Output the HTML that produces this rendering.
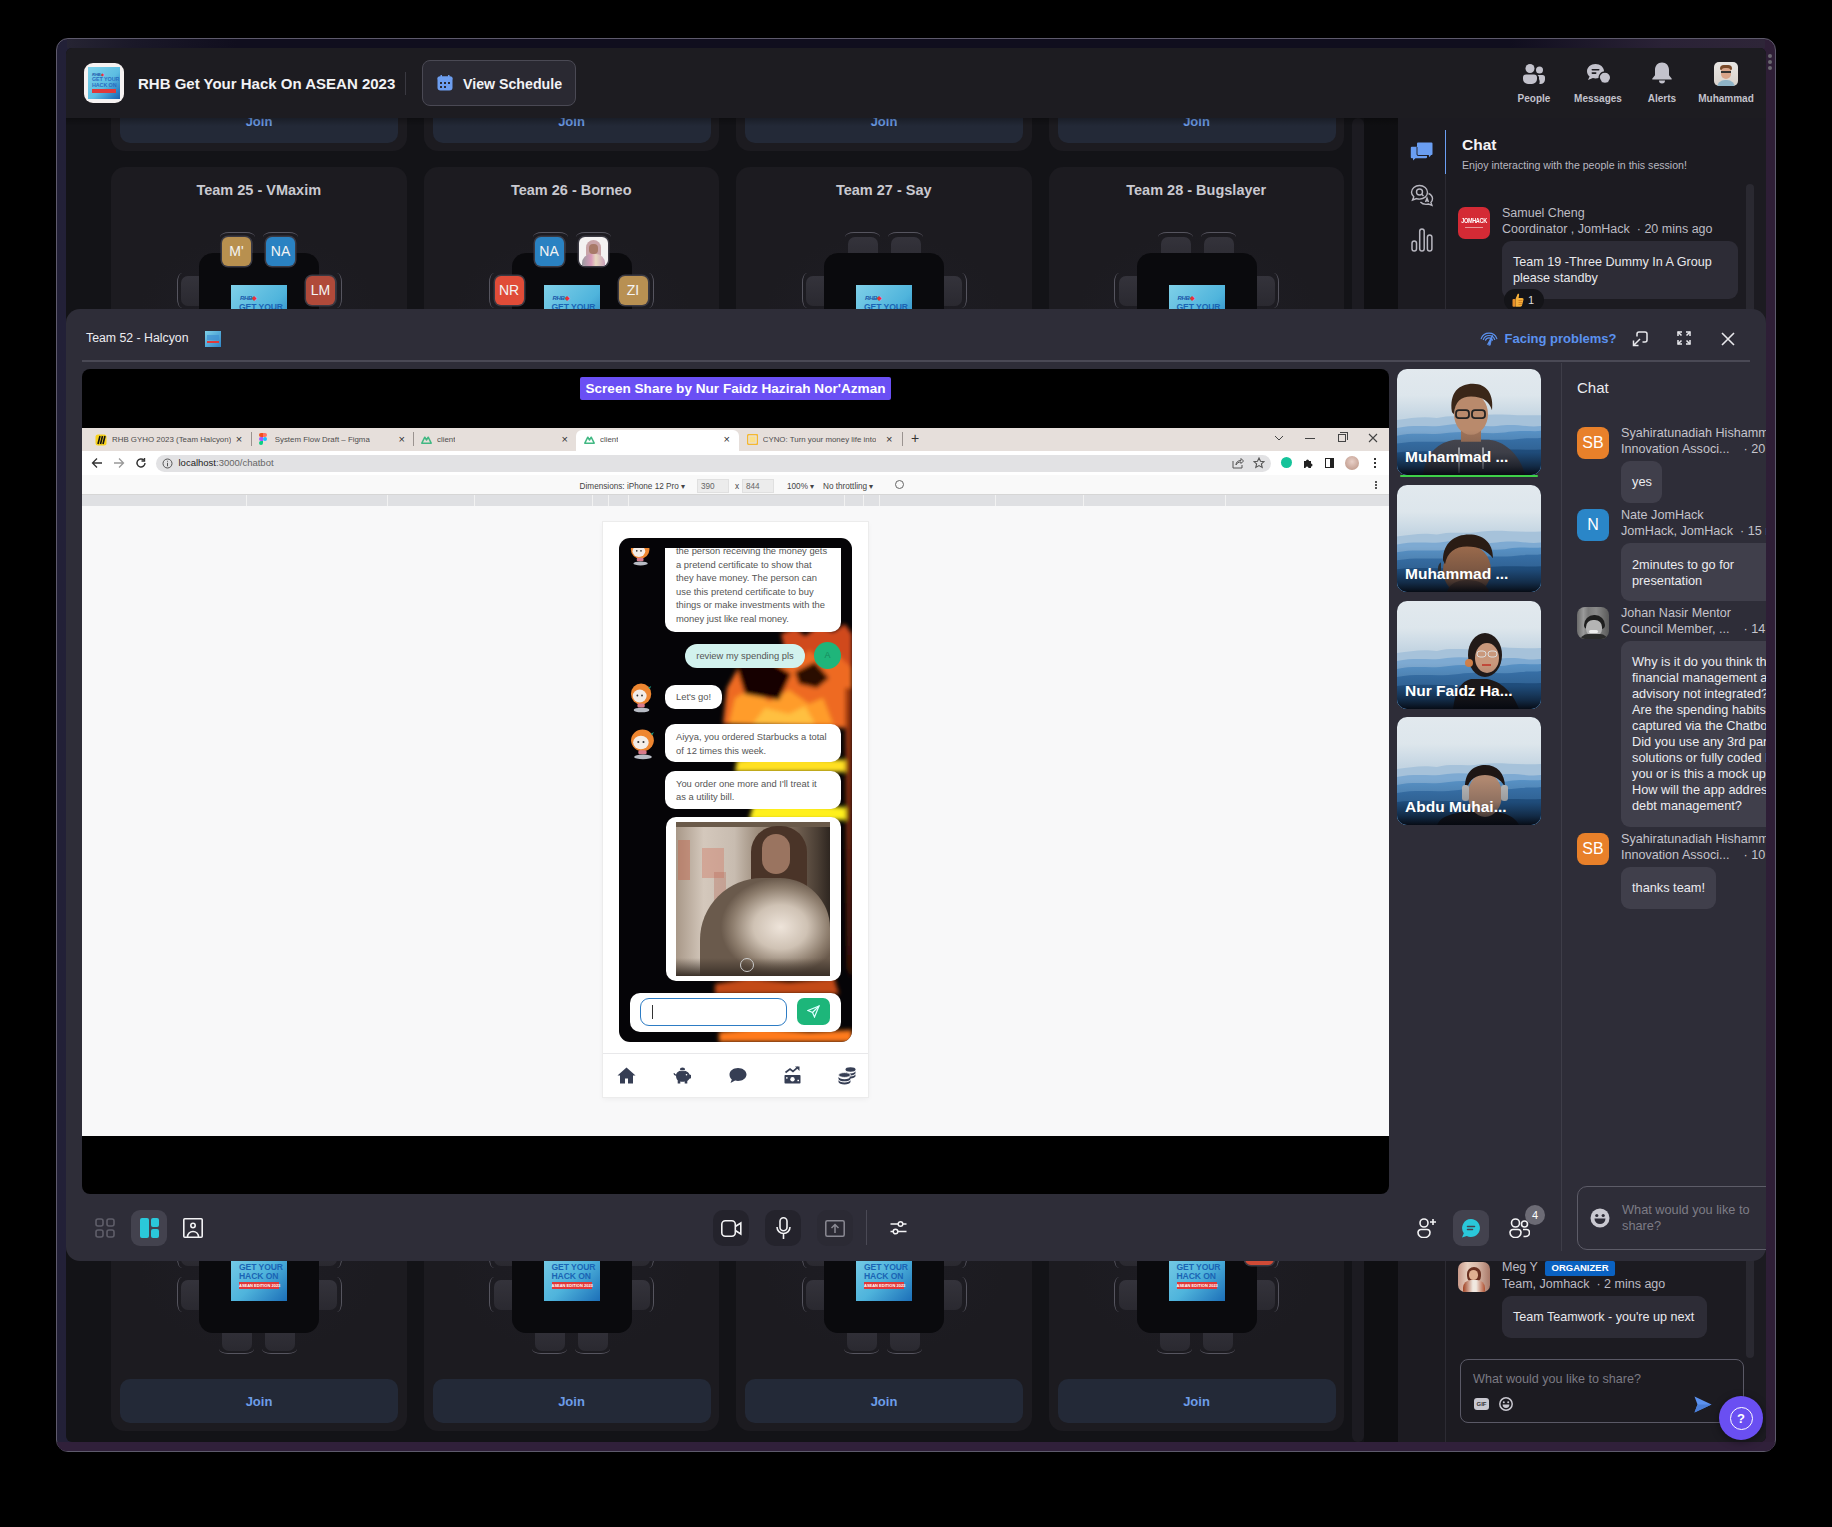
<!DOCTYPE html><html><head><meta charset="utf-8"><style>
*{box-sizing:border-box;margin:0;padding:0}
html,body{width:1832px;height:1527px;overflow:hidden;background:#000;font-family:"Liberation Sans",sans-serif}
.a{position:absolute}
#frame{left:56px;top:38px;width:1720px;height:1414px;border-radius:12px;border:1px solid #5e5a6c;background:linear-gradient(90deg,#222037 0%,#262039 50%,#2e1e36 100%)}
#app{left:66px;top:48px;width:1700px;height:1394px;border-radius:6px;overflow:hidden;background:#131317}
.card{width:295.5px;height:304px;border-radius:14px;background:#1c1b20}
.card .tt{position:absolute;left:0;right:0;top:14px;text-align:center;color:#c9c9d0;font-weight:bold;font-size:14.5px;line-height:18px}
.join{position:absolute;left:9px;top:252px;width:278px;height:44px;border-radius:10px;background:#232937;color:#6d9de8;font-weight:bold;font-size:13px;text-align:center;line-height:46px}
.tbl{position:absolute;left:88px;top:86px;width:120px;height:120px;border-radius:14px;background:#0a0a0d}
.seat{position:absolute;width:30px;height:30px;border-radius:7px;background:linear-gradient(180deg,#34333b,#2a2930)}
.so{position:absolute;border-style:solid;border-color:#56555f}
.logo{position:absolute;left:120px;top:118px;width:56px;height:56px;background:linear-gradient(135deg,#7fd0e8 0%,#4fb4dc 55%,#1c6fb8 100%);overflow:hidden}
.av{position:absolute;width:29px;height:29px;border-radius:6px;color:#f4f4f4;font-size:14px;text-align:center;line-height:29px;box-shadow:0 0 0 1.5px #3a3942}
</style></head><body>
<div id="frame" class="a"></div>
<div class="a" style="left:67px;top:39px;width:1698px;height:9px;background:linear-gradient(90deg,#262433 0%,#1a1828 4%,#100e1e 10%,#100e1e 85%,#2a2236 94%,#2e2538 100%)"></div>
<div class="a" style="left:57px;top:1442px;width:1718px;height:9px;border-radius:0 0 11px 11px;background:#30203a"></div>
<div class="a" style="left:66px;top:48px;width:1700px;height:1394px;border-radius:6px;overflow:hidden;background:#131317">
<div class="a card" style="left:45px;top:-201px"><div class="a" style="left:28px;top:66px;width:240px;height:160px;border-radius:50%;background:radial-gradient(ellipse 50% 50% at 50% 50%,#1f1e24 0%,#1d1c22 60%,rgba(28,27,32,0) 100%)"></div><div class="tt"></div><div class="seat" style="left:112px;top:70px"></div><div class="seat" style="left:155px;top:70px"></div><div class="seat" style="left:70px;top:109px"></div><div class="seat" style="left:70px;top:153px"></div><div class="seat" style="left:196px;top:109px"></div><div class="seat" style="left:196px;top:153px"></div><div class="seat" style="left:111px;top:194px"></div><div class="seat" style="left:154px;top:194px"></div><div class="so" style="left:109px;top:64.5px;width:35px;height:10px;border-width:1px 0 0 0;border-radius:9px 9px 0 0/5px 5px 0 0"></div><div class="so" style="left:108px;top:216.5px;width:35px;height:10px;border-width:0 0 1px 0;border-radius:0 0 9px 9px/0 0 5px 5px"></div><div class="so" style="left:152px;top:64.5px;width:35px;height:10px;border-width:1px 0 0 0;border-radius:9px 9px 0 0/5px 5px 0 0"></div><div class="so" style="left:151px;top:216.5px;width:35px;height:10px;border-width:0 0 1px 0;border-radius:0 0 9px 9px/0 0 5px 5px"></div><div class="so" style="left:65.5px;top:106px;width:10px;height:35px;border-width:0 0 0 1px;border-radius:5px 0 0 5px/9px 0 0 9px"></div><div class="so" style="left:220.5px;top:106px;width:10px;height:35px;border-width:0 1px 0 0;border-radius:0 5px 5px 0/0 9px 9px 0"></div><div class="so" style="left:65.5px;top:150px;width:10px;height:35px;border-width:0 0 0 1px;border-radius:5px 0 0 5px/9px 0 0 9px"></div><div class="so" style="left:220.5px;top:150px;width:10px;height:35px;border-width:0 1px 0 0;border-radius:0 5px 5px 0/0 9px 9px 0"></div><div class="tbl"></div><div class="logo"><div class="a" style="left:9px;top:10px;font:italic bold 6px/7px 'Liberation Sans';color:#1a55a8;letter-spacing:-0.3px">RHB<span style="color:#e8323a;font-style:normal">&#9670;</span></div><div class="a" style="left:8px;top:18px;width:42px;font:bold 8.6px/8.5px 'Liberation Sans';color:#1a64b4;letter-spacing:-0.1px;white-space:nowrap">GET YOUR<br>HACK ON</div><div class="a" style="left:8px;top:37px;width:40px;height:7px;background:#e0393a;font:bold 4px/7px 'Liberation Sans';color:#fff;text-align:center;white-space:nowrap">ASEAN EDITION 2023</div></div><div class="join">Join</div></div>
<div class="a card" style="left:357.5px;top:-201px"><div class="a" style="left:28px;top:66px;width:240px;height:160px;border-radius:50%;background:radial-gradient(ellipse 50% 50% at 50% 50%,#1f1e24 0%,#1d1c22 60%,rgba(28,27,32,0) 100%)"></div><div class="tt"></div><div class="seat" style="left:112px;top:70px"></div><div class="seat" style="left:155px;top:70px"></div><div class="seat" style="left:70px;top:109px"></div><div class="seat" style="left:70px;top:153px"></div><div class="seat" style="left:196px;top:109px"></div><div class="seat" style="left:196px;top:153px"></div><div class="seat" style="left:111px;top:194px"></div><div class="seat" style="left:154px;top:194px"></div><div class="so" style="left:109px;top:64.5px;width:35px;height:10px;border-width:1px 0 0 0;border-radius:9px 9px 0 0/5px 5px 0 0"></div><div class="so" style="left:108px;top:216.5px;width:35px;height:10px;border-width:0 0 1px 0;border-radius:0 0 9px 9px/0 0 5px 5px"></div><div class="so" style="left:152px;top:64.5px;width:35px;height:10px;border-width:1px 0 0 0;border-radius:9px 9px 0 0/5px 5px 0 0"></div><div class="so" style="left:151px;top:216.5px;width:35px;height:10px;border-width:0 0 1px 0;border-radius:0 0 9px 9px/0 0 5px 5px"></div><div class="so" style="left:65.5px;top:106px;width:10px;height:35px;border-width:0 0 0 1px;border-radius:5px 0 0 5px/9px 0 0 9px"></div><div class="so" style="left:220.5px;top:106px;width:10px;height:35px;border-width:0 1px 0 0;border-radius:0 5px 5px 0/0 9px 9px 0"></div><div class="so" style="left:65.5px;top:150px;width:10px;height:35px;border-width:0 0 0 1px;border-radius:5px 0 0 5px/9px 0 0 9px"></div><div class="so" style="left:220.5px;top:150px;width:10px;height:35px;border-width:0 1px 0 0;border-radius:0 5px 5px 0/0 9px 9px 0"></div><div class="tbl"></div><div class="logo"><div class="a" style="left:9px;top:10px;font:italic bold 6px/7px 'Liberation Sans';color:#1a55a8;letter-spacing:-0.3px">RHB<span style="color:#e8323a;font-style:normal">&#9670;</span></div><div class="a" style="left:8px;top:18px;width:42px;font:bold 8.6px/8.5px 'Liberation Sans';color:#1a64b4;letter-spacing:-0.1px;white-space:nowrap">GET YOUR<br>HACK ON</div><div class="a" style="left:8px;top:37px;width:40px;height:7px;background:#e0393a;font:bold 4px/7px 'Liberation Sans';color:#fff;text-align:center;white-space:nowrap">ASEAN EDITION 2023</div></div><div class="join">Join</div></div>
<div class="a card" style="left:670px;top:-201px"><div class="a" style="left:28px;top:66px;width:240px;height:160px;border-radius:50%;background:radial-gradient(ellipse 50% 50% at 50% 50%,#1f1e24 0%,#1d1c22 60%,rgba(28,27,32,0) 100%)"></div><div class="tt"></div><div class="seat" style="left:112px;top:70px"></div><div class="seat" style="left:155px;top:70px"></div><div class="seat" style="left:70px;top:109px"></div><div class="seat" style="left:70px;top:153px"></div><div class="seat" style="left:196px;top:109px"></div><div class="seat" style="left:196px;top:153px"></div><div class="seat" style="left:111px;top:194px"></div><div class="seat" style="left:154px;top:194px"></div><div class="so" style="left:109px;top:64.5px;width:35px;height:10px;border-width:1px 0 0 0;border-radius:9px 9px 0 0/5px 5px 0 0"></div><div class="so" style="left:108px;top:216.5px;width:35px;height:10px;border-width:0 0 1px 0;border-radius:0 0 9px 9px/0 0 5px 5px"></div><div class="so" style="left:152px;top:64.5px;width:35px;height:10px;border-width:1px 0 0 0;border-radius:9px 9px 0 0/5px 5px 0 0"></div><div class="so" style="left:151px;top:216.5px;width:35px;height:10px;border-width:0 0 1px 0;border-radius:0 0 9px 9px/0 0 5px 5px"></div><div class="so" style="left:65.5px;top:106px;width:10px;height:35px;border-width:0 0 0 1px;border-radius:5px 0 0 5px/9px 0 0 9px"></div><div class="so" style="left:220.5px;top:106px;width:10px;height:35px;border-width:0 1px 0 0;border-radius:0 5px 5px 0/0 9px 9px 0"></div><div class="so" style="left:65.5px;top:150px;width:10px;height:35px;border-width:0 0 0 1px;border-radius:5px 0 0 5px/9px 0 0 9px"></div><div class="so" style="left:220.5px;top:150px;width:10px;height:35px;border-width:0 1px 0 0;border-radius:0 5px 5px 0/0 9px 9px 0"></div><div class="tbl"></div><div class="logo"><div class="a" style="left:9px;top:10px;font:italic bold 6px/7px 'Liberation Sans';color:#1a55a8;letter-spacing:-0.3px">RHB<span style="color:#e8323a;font-style:normal">&#9670;</span></div><div class="a" style="left:8px;top:18px;width:42px;font:bold 8.6px/8.5px 'Liberation Sans';color:#1a64b4;letter-spacing:-0.1px;white-space:nowrap">GET YOUR<br>HACK ON</div><div class="a" style="left:8px;top:37px;width:40px;height:7px;background:#e0393a;font:bold 4px/7px 'Liberation Sans';color:#fff;text-align:center;white-space:nowrap">ASEAN EDITION 2023</div></div><div class="join">Join</div></div>
<div class="a card" style="left:982.5px;top:-201px"><div class="a" style="left:28px;top:66px;width:240px;height:160px;border-radius:50%;background:radial-gradient(ellipse 50% 50% at 50% 50%,#1f1e24 0%,#1d1c22 60%,rgba(28,27,32,0) 100%)"></div><div class="tt"></div><div class="seat" style="left:112px;top:70px"></div><div class="seat" style="left:155px;top:70px"></div><div class="seat" style="left:70px;top:109px"></div><div class="seat" style="left:70px;top:153px"></div><div class="seat" style="left:196px;top:109px"></div><div class="seat" style="left:196px;top:153px"></div><div class="seat" style="left:111px;top:194px"></div><div class="seat" style="left:154px;top:194px"></div><div class="so" style="left:109px;top:64.5px;width:35px;height:10px;border-width:1px 0 0 0;border-radius:9px 9px 0 0/5px 5px 0 0"></div><div class="so" style="left:108px;top:216.5px;width:35px;height:10px;border-width:0 0 1px 0;border-radius:0 0 9px 9px/0 0 5px 5px"></div><div class="so" style="left:152px;top:64.5px;width:35px;height:10px;border-width:1px 0 0 0;border-radius:9px 9px 0 0/5px 5px 0 0"></div><div class="so" style="left:151px;top:216.5px;width:35px;height:10px;border-width:0 0 1px 0;border-radius:0 0 9px 9px/0 0 5px 5px"></div><div class="so" style="left:65.5px;top:106px;width:10px;height:35px;border-width:0 0 0 1px;border-radius:5px 0 0 5px/9px 0 0 9px"></div><div class="so" style="left:220.5px;top:106px;width:10px;height:35px;border-width:0 1px 0 0;border-radius:0 5px 5px 0/0 9px 9px 0"></div><div class="so" style="left:65.5px;top:150px;width:10px;height:35px;border-width:0 0 0 1px;border-radius:5px 0 0 5px/9px 0 0 9px"></div><div class="so" style="left:220.5px;top:150px;width:10px;height:35px;border-width:0 1px 0 0;border-radius:0 5px 5px 0/0 9px 9px 0"></div><div class="tbl"></div><div class="logo"><div class="a" style="left:9px;top:10px;font:italic bold 6px/7px 'Liberation Sans';color:#1a55a8;letter-spacing:-0.3px">RHB<span style="color:#e8323a;font-style:normal">&#9670;</span></div><div class="a" style="left:8px;top:18px;width:42px;font:bold 8.6px/8.5px 'Liberation Sans';color:#1a64b4;letter-spacing:-0.1px;white-space:nowrap">GET YOUR<br>HACK ON</div><div class="a" style="left:8px;top:37px;width:40px;height:7px;background:#e0393a;font:bold 4px/7px 'Liberation Sans';color:#fff;text-align:center;white-space:nowrap">ASEAN EDITION 2023</div></div><div class="join">Join</div></div>
<div class="a card" style="left:45px;top:119px"><div class="a" style="left:28px;top:66px;width:240px;height:160px;border-radius:50%;background:radial-gradient(ellipse 50% 50% at 50% 50%,#1f1e24 0%,#1d1c22 60%,rgba(28,27,32,0) 100%)"></div><div class="tt">Team 25 - VMaxim</div><div class="seat" style="left:112px;top:70px"></div><div class="seat" style="left:155px;top:70px"></div><div class="seat" style="left:70px;top:109px"></div><div class="seat" style="left:70px;top:153px"></div><div class="seat" style="left:196px;top:109px"></div><div class="seat" style="left:196px;top:153px"></div><div class="seat" style="left:111px;top:194px"></div><div class="seat" style="left:154px;top:194px"></div><div class="so" style="left:109px;top:64.5px;width:35px;height:10px;border-width:1px 0 0 0;border-radius:9px 9px 0 0/5px 5px 0 0"></div><div class="so" style="left:108px;top:216.5px;width:35px;height:10px;border-width:0 0 1px 0;border-radius:0 0 9px 9px/0 0 5px 5px"></div><div class="so" style="left:152px;top:64.5px;width:35px;height:10px;border-width:1px 0 0 0;border-radius:9px 9px 0 0/5px 5px 0 0"></div><div class="so" style="left:151px;top:216.5px;width:35px;height:10px;border-width:0 0 1px 0;border-radius:0 0 9px 9px/0 0 5px 5px"></div><div class="so" style="left:65.5px;top:106px;width:10px;height:35px;border-width:0 0 0 1px;border-radius:5px 0 0 5px/9px 0 0 9px"></div><div class="so" style="left:220.5px;top:106px;width:10px;height:35px;border-width:0 1px 0 0;border-radius:0 5px 5px 0/0 9px 9px 0"></div><div class="so" style="left:65.5px;top:150px;width:10px;height:35px;border-width:0 0 0 1px;border-radius:5px 0 0 5px/9px 0 0 9px"></div><div class="so" style="left:220.5px;top:150px;width:10px;height:35px;border-width:0 1px 0 0;border-radius:0 5px 5px 0/0 9px 9px 0"></div><div class="tbl"></div><div class="logo"><div class="a" style="left:9px;top:10px;font:italic bold 6px/7px 'Liberation Sans';color:#1a55a8;letter-spacing:-0.3px">RHB<span style="color:#e8323a;font-style:normal">&#9670;</span></div><div class="a" style="left:8px;top:18px;width:42px;font:bold 8.6px/8.5px 'Liberation Sans';color:#1a64b4;letter-spacing:-0.1px;white-space:nowrap">GET YOUR<br>HACK ON</div><div class="a" style="left:8px;top:37px;width:40px;height:7px;background:#e0393a;font:bold 4px/7px 'Liberation Sans';color:#fff;text-align:center;white-space:nowrap">ASEAN EDITION 2023</div></div><div class="av" style="left:111px;top:69.5px;background:#b8904f">M'</div><div class="av" style="left:155px;top:69.5px;background:#2a82c2">NA</div><div class="av" style="left:195px;top:109px;background:#b04a3a">LM</div><div class="join">Join</div></div>
<div class="a card" style="left:357.5px;top:119px"><div class="a" style="left:28px;top:66px;width:240px;height:160px;border-radius:50%;background:radial-gradient(ellipse 50% 50% at 50% 50%,#1f1e24 0%,#1d1c22 60%,rgba(28,27,32,0) 100%)"></div><div class="tt">Team 26 - Borneo</div><div class="seat" style="left:112px;top:70px"></div><div class="seat" style="left:155px;top:70px"></div><div class="seat" style="left:70px;top:109px"></div><div class="seat" style="left:70px;top:153px"></div><div class="seat" style="left:196px;top:109px"></div><div class="seat" style="left:196px;top:153px"></div><div class="seat" style="left:111px;top:194px"></div><div class="seat" style="left:154px;top:194px"></div><div class="so" style="left:109px;top:64.5px;width:35px;height:10px;border-width:1px 0 0 0;border-radius:9px 9px 0 0/5px 5px 0 0"></div><div class="so" style="left:108px;top:216.5px;width:35px;height:10px;border-width:0 0 1px 0;border-radius:0 0 9px 9px/0 0 5px 5px"></div><div class="so" style="left:152px;top:64.5px;width:35px;height:10px;border-width:1px 0 0 0;border-radius:9px 9px 0 0/5px 5px 0 0"></div><div class="so" style="left:151px;top:216.5px;width:35px;height:10px;border-width:0 0 1px 0;border-radius:0 0 9px 9px/0 0 5px 5px"></div><div class="so" style="left:65.5px;top:106px;width:10px;height:35px;border-width:0 0 0 1px;border-radius:5px 0 0 5px/9px 0 0 9px"></div><div class="so" style="left:220.5px;top:106px;width:10px;height:35px;border-width:0 1px 0 0;border-radius:0 5px 5px 0/0 9px 9px 0"></div><div class="so" style="left:65.5px;top:150px;width:10px;height:35px;border-width:0 0 0 1px;border-radius:5px 0 0 5px/9px 0 0 9px"></div><div class="so" style="left:220.5px;top:150px;width:10px;height:35px;border-width:0 1px 0 0;border-radius:0 5px 5px 0/0 9px 9px 0"></div><div class="tbl"></div><div class="logo"><div class="a" style="left:9px;top:10px;font:italic bold 6px/7px 'Liberation Sans';color:#1a55a8;letter-spacing:-0.3px">RHB<span style="color:#e8323a;font-style:normal">&#9670;</span></div><div class="a" style="left:8px;top:18px;width:42px;font:bold 8.6px/8.5px 'Liberation Sans';color:#1a64b4;letter-spacing:-0.1px;white-space:nowrap">GET YOUR<br>HACK ON</div><div class="a" style="left:8px;top:37px;width:40px;height:7px;background:#e0393a;font:bold 4px/7px 'Liberation Sans';color:#fff;text-align:center;white-space:nowrap">ASEAN EDITION 2023</div></div><div class="av" style="left:111px;top:69.5px;background:#2a82c2">NA</div><div class="av" style="left:155px;top:69.5px;background:#f4f2f2;overflow:hidden"><div class="a" style="left:7px;top:3px;width:15px;height:18px;border-radius:8px 8px 4px 4px;background:#c9a4a8"></div><div class="a" style="left:10px;top:7px;width:9px;height:10px;border-radius:4px;background:#a87a68"></div><div class="a" style="left:3px;top:17px;width:23px;height:14px;border-radius:9px 9px 0 0;background:linear-gradient(90deg,#9a9aa0,#d89ab8 40%,#e8d8c0 60%,#c9a0b8)"></div></div><div class="av" style="left:71px;top:109px;background:#e04c38">NR</div><div class="av" style="left:195px;top:109px;background:#b89052">ZI</div><div class="join">Join</div></div>
<div class="a card" style="left:670px;top:119px"><div class="a" style="left:28px;top:66px;width:240px;height:160px;border-radius:50%;background:radial-gradient(ellipse 50% 50% at 50% 50%,#1f1e24 0%,#1d1c22 60%,rgba(28,27,32,0) 100%)"></div><div class="tt">Team 27 - Say</div><div class="seat" style="left:112px;top:70px"></div><div class="seat" style="left:155px;top:70px"></div><div class="seat" style="left:70px;top:109px"></div><div class="seat" style="left:70px;top:153px"></div><div class="seat" style="left:196px;top:109px"></div><div class="seat" style="left:196px;top:153px"></div><div class="seat" style="left:111px;top:194px"></div><div class="seat" style="left:154px;top:194px"></div><div class="so" style="left:109px;top:64.5px;width:35px;height:10px;border-width:1px 0 0 0;border-radius:9px 9px 0 0/5px 5px 0 0"></div><div class="so" style="left:108px;top:216.5px;width:35px;height:10px;border-width:0 0 1px 0;border-radius:0 0 9px 9px/0 0 5px 5px"></div><div class="so" style="left:152px;top:64.5px;width:35px;height:10px;border-width:1px 0 0 0;border-radius:9px 9px 0 0/5px 5px 0 0"></div><div class="so" style="left:151px;top:216.5px;width:35px;height:10px;border-width:0 0 1px 0;border-radius:0 0 9px 9px/0 0 5px 5px"></div><div class="so" style="left:65.5px;top:106px;width:10px;height:35px;border-width:0 0 0 1px;border-radius:5px 0 0 5px/9px 0 0 9px"></div><div class="so" style="left:220.5px;top:106px;width:10px;height:35px;border-width:0 1px 0 0;border-radius:0 5px 5px 0/0 9px 9px 0"></div><div class="so" style="left:65.5px;top:150px;width:10px;height:35px;border-width:0 0 0 1px;border-radius:5px 0 0 5px/9px 0 0 9px"></div><div class="so" style="left:220.5px;top:150px;width:10px;height:35px;border-width:0 1px 0 0;border-radius:0 5px 5px 0/0 9px 9px 0"></div><div class="tbl"></div><div class="logo"><div class="a" style="left:9px;top:10px;font:italic bold 6px/7px 'Liberation Sans';color:#1a55a8;letter-spacing:-0.3px">RHB<span style="color:#e8323a;font-style:normal">&#9670;</span></div><div class="a" style="left:8px;top:18px;width:42px;font:bold 8.6px/8.5px 'Liberation Sans';color:#1a64b4;letter-spacing:-0.1px;white-space:nowrap">GET YOUR<br>HACK ON</div><div class="a" style="left:8px;top:37px;width:40px;height:7px;background:#e0393a;font:bold 4px/7px 'Liberation Sans';color:#fff;text-align:center;white-space:nowrap">ASEAN EDITION 2023</div></div><div class="join">Join</div></div>
<div class="a card" style="left:982.5px;top:119px"><div class="a" style="left:28px;top:66px;width:240px;height:160px;border-radius:50%;background:radial-gradient(ellipse 50% 50% at 50% 50%,#1f1e24 0%,#1d1c22 60%,rgba(28,27,32,0) 100%)"></div><div class="tt">Team 28 - Bugslayer</div><div class="seat" style="left:112px;top:70px"></div><div class="seat" style="left:155px;top:70px"></div><div class="seat" style="left:70px;top:109px"></div><div class="seat" style="left:70px;top:153px"></div><div class="seat" style="left:196px;top:109px"></div><div class="seat" style="left:196px;top:153px"></div><div class="seat" style="left:111px;top:194px"></div><div class="seat" style="left:154px;top:194px"></div><div class="so" style="left:109px;top:64.5px;width:35px;height:10px;border-width:1px 0 0 0;border-radius:9px 9px 0 0/5px 5px 0 0"></div><div class="so" style="left:108px;top:216.5px;width:35px;height:10px;border-width:0 0 1px 0;border-radius:0 0 9px 9px/0 0 5px 5px"></div><div class="so" style="left:152px;top:64.5px;width:35px;height:10px;border-width:1px 0 0 0;border-radius:9px 9px 0 0/5px 5px 0 0"></div><div class="so" style="left:151px;top:216.5px;width:35px;height:10px;border-width:0 0 1px 0;border-radius:0 0 9px 9px/0 0 5px 5px"></div><div class="so" style="left:65.5px;top:106px;width:10px;height:35px;border-width:0 0 0 1px;border-radius:5px 0 0 5px/9px 0 0 9px"></div><div class="so" style="left:220.5px;top:106px;width:10px;height:35px;border-width:0 1px 0 0;border-radius:0 5px 5px 0/0 9px 9px 0"></div><div class="so" style="left:65.5px;top:150px;width:10px;height:35px;border-width:0 0 0 1px;border-radius:5px 0 0 5px/9px 0 0 9px"></div><div class="so" style="left:220.5px;top:150px;width:10px;height:35px;border-width:0 1px 0 0;border-radius:0 5px 5px 0/0 9px 9px 0"></div><div class="tbl"></div><div class="logo"><div class="a" style="left:9px;top:10px;font:italic bold 6px/7px 'Liberation Sans';color:#1a55a8;letter-spacing:-0.3px">RHB<span style="color:#e8323a;font-style:normal">&#9670;</span></div><div class="a" style="left:8px;top:18px;width:42px;font:bold 8.6px/8.5px 'Liberation Sans';color:#1a64b4;letter-spacing:-0.1px;white-space:nowrap">GET YOUR<br>HACK ON</div><div class="a" style="left:8px;top:37px;width:40px;height:7px;background:#e0393a;font:bold 4px/7px 'Liberation Sans';color:#fff;text-align:center;white-space:nowrap">ASEAN EDITION 2023</div></div><div class="join">Join</div></div>
<div class="a card" style="left:45px;top:1079px"><div class="a" style="left:28px;top:66px;width:240px;height:160px;border-radius:50%;background:radial-gradient(ellipse 50% 50% at 50% 50%,#1f1e24 0%,#1d1c22 60%,rgba(28,27,32,0) 100%)"></div><div class="tt"></div><div class="seat" style="left:112px;top:70px"></div><div class="seat" style="left:155px;top:70px"></div><div class="seat" style="left:70px;top:109px"></div><div class="seat" style="left:70px;top:153px"></div><div class="seat" style="left:196px;top:109px"></div><div class="seat" style="left:196px;top:153px"></div><div class="seat" style="left:111px;top:194px"></div><div class="seat" style="left:154px;top:194px"></div><div class="so" style="left:109px;top:64.5px;width:35px;height:10px;border-width:1px 0 0 0;border-radius:9px 9px 0 0/5px 5px 0 0"></div><div class="so" style="left:108px;top:216.5px;width:35px;height:10px;border-width:0 0 1px 0;border-radius:0 0 9px 9px/0 0 5px 5px"></div><div class="so" style="left:152px;top:64.5px;width:35px;height:10px;border-width:1px 0 0 0;border-radius:9px 9px 0 0/5px 5px 0 0"></div><div class="so" style="left:151px;top:216.5px;width:35px;height:10px;border-width:0 0 1px 0;border-radius:0 0 9px 9px/0 0 5px 5px"></div><div class="so" style="left:65.5px;top:106px;width:10px;height:35px;border-width:0 0 0 1px;border-radius:5px 0 0 5px/9px 0 0 9px"></div><div class="so" style="left:220.5px;top:106px;width:10px;height:35px;border-width:0 1px 0 0;border-radius:0 5px 5px 0/0 9px 9px 0"></div><div class="so" style="left:65.5px;top:150px;width:10px;height:35px;border-width:0 0 0 1px;border-radius:5px 0 0 5px/9px 0 0 9px"></div><div class="so" style="left:220.5px;top:150px;width:10px;height:35px;border-width:0 1px 0 0;border-radius:0 5px 5px 0/0 9px 9px 0"></div><div class="tbl"></div><div class="logo"><div class="a" style="left:9px;top:10px;font:italic bold 6px/7px 'Liberation Sans';color:#1a55a8;letter-spacing:-0.3px">RHB<span style="color:#e8323a;font-style:normal">&#9670;</span></div><div class="a" style="left:8px;top:18px;width:42px;font:bold 8.6px/8.5px 'Liberation Sans';color:#1a64b4;letter-spacing:-0.1px;white-space:nowrap">GET YOUR<br>HACK ON</div><div class="a" style="left:8px;top:37px;width:40px;height:7px;background:#e0393a;font:bold 4px/7px 'Liberation Sans';color:#fff;text-align:center;white-space:nowrap">ASEAN EDITION 2023</div></div><div class="join">Join</div></div>
<div class="a card" style="left:357.5px;top:1079px"><div class="a" style="left:28px;top:66px;width:240px;height:160px;border-radius:50%;background:radial-gradient(ellipse 50% 50% at 50% 50%,#1f1e24 0%,#1d1c22 60%,rgba(28,27,32,0) 100%)"></div><div class="tt"></div><div class="seat" style="left:112px;top:70px"></div><div class="seat" style="left:155px;top:70px"></div><div class="seat" style="left:70px;top:109px"></div><div class="seat" style="left:70px;top:153px"></div><div class="seat" style="left:196px;top:109px"></div><div class="seat" style="left:196px;top:153px"></div><div class="seat" style="left:111px;top:194px"></div><div class="seat" style="left:154px;top:194px"></div><div class="so" style="left:109px;top:64.5px;width:35px;height:10px;border-width:1px 0 0 0;border-radius:9px 9px 0 0/5px 5px 0 0"></div><div class="so" style="left:108px;top:216.5px;width:35px;height:10px;border-width:0 0 1px 0;border-radius:0 0 9px 9px/0 0 5px 5px"></div><div class="so" style="left:152px;top:64.5px;width:35px;height:10px;border-width:1px 0 0 0;border-radius:9px 9px 0 0/5px 5px 0 0"></div><div class="so" style="left:151px;top:216.5px;width:35px;height:10px;border-width:0 0 1px 0;border-radius:0 0 9px 9px/0 0 5px 5px"></div><div class="so" style="left:65.5px;top:106px;width:10px;height:35px;border-width:0 0 0 1px;border-radius:5px 0 0 5px/9px 0 0 9px"></div><div class="so" style="left:220.5px;top:106px;width:10px;height:35px;border-width:0 1px 0 0;border-radius:0 5px 5px 0/0 9px 9px 0"></div><div class="so" style="left:65.5px;top:150px;width:10px;height:35px;border-width:0 0 0 1px;border-radius:5px 0 0 5px/9px 0 0 9px"></div><div class="so" style="left:220.5px;top:150px;width:10px;height:35px;border-width:0 1px 0 0;border-radius:0 5px 5px 0/0 9px 9px 0"></div><div class="tbl"></div><div class="logo"><div class="a" style="left:9px;top:10px;font:italic bold 6px/7px 'Liberation Sans';color:#1a55a8;letter-spacing:-0.3px">RHB<span style="color:#e8323a;font-style:normal">&#9670;</span></div><div class="a" style="left:8px;top:18px;width:42px;font:bold 8.6px/8.5px 'Liberation Sans';color:#1a64b4;letter-spacing:-0.1px;white-space:nowrap">GET YOUR<br>HACK ON</div><div class="a" style="left:8px;top:37px;width:40px;height:7px;background:#e0393a;font:bold 4px/7px 'Liberation Sans';color:#fff;text-align:center;white-space:nowrap">ASEAN EDITION 2023</div></div><div class="join">Join</div></div>
<div class="a card" style="left:670px;top:1079px"><div class="a" style="left:28px;top:66px;width:240px;height:160px;border-radius:50%;background:radial-gradient(ellipse 50% 50% at 50% 50%,#1f1e24 0%,#1d1c22 60%,rgba(28,27,32,0) 100%)"></div><div class="tt"></div><div class="seat" style="left:112px;top:70px"></div><div class="seat" style="left:155px;top:70px"></div><div class="seat" style="left:70px;top:109px"></div><div class="seat" style="left:70px;top:153px"></div><div class="seat" style="left:196px;top:109px"></div><div class="seat" style="left:196px;top:153px"></div><div class="seat" style="left:111px;top:194px"></div><div class="seat" style="left:154px;top:194px"></div><div class="so" style="left:109px;top:64.5px;width:35px;height:10px;border-width:1px 0 0 0;border-radius:9px 9px 0 0/5px 5px 0 0"></div><div class="so" style="left:108px;top:216.5px;width:35px;height:10px;border-width:0 0 1px 0;border-radius:0 0 9px 9px/0 0 5px 5px"></div><div class="so" style="left:152px;top:64.5px;width:35px;height:10px;border-width:1px 0 0 0;border-radius:9px 9px 0 0/5px 5px 0 0"></div><div class="so" style="left:151px;top:216.5px;width:35px;height:10px;border-width:0 0 1px 0;border-radius:0 0 9px 9px/0 0 5px 5px"></div><div class="so" style="left:65.5px;top:106px;width:10px;height:35px;border-width:0 0 0 1px;border-radius:5px 0 0 5px/9px 0 0 9px"></div><div class="so" style="left:220.5px;top:106px;width:10px;height:35px;border-width:0 1px 0 0;border-radius:0 5px 5px 0/0 9px 9px 0"></div><div class="so" style="left:65.5px;top:150px;width:10px;height:35px;border-width:0 0 0 1px;border-radius:5px 0 0 5px/9px 0 0 9px"></div><div class="so" style="left:220.5px;top:150px;width:10px;height:35px;border-width:0 1px 0 0;border-radius:0 5px 5px 0/0 9px 9px 0"></div><div class="tbl"></div><div class="logo"><div class="a" style="left:9px;top:10px;font:italic bold 6px/7px 'Liberation Sans';color:#1a55a8;letter-spacing:-0.3px">RHB<span style="color:#e8323a;font-style:normal">&#9670;</span></div><div class="a" style="left:8px;top:18px;width:42px;font:bold 8.6px/8.5px 'Liberation Sans';color:#1a64b4;letter-spacing:-0.1px;white-space:nowrap">GET YOUR<br>HACK ON</div><div class="a" style="left:8px;top:37px;width:40px;height:7px;background:#e0393a;font:bold 4px/7px 'Liberation Sans';color:#fff;text-align:center;white-space:nowrap">ASEAN EDITION 2023</div></div><div class="join">Join</div></div>
<div class="a card" style="left:982.5px;top:1079px"><div class="a" style="left:28px;top:66px;width:240px;height:160px;border-radius:50%;background:radial-gradient(ellipse 50% 50% at 50% 50%,#1f1e24 0%,#1d1c22 60%,rgba(28,27,32,0) 100%)"></div><div class="tt"></div><div class="seat" style="left:112px;top:70px"></div><div class="seat" style="left:155px;top:70px"></div><div class="seat" style="left:70px;top:109px"></div><div class="seat" style="left:70px;top:153px"></div><div class="seat" style="left:196px;top:109px"></div><div class="seat" style="left:196px;top:153px"></div><div class="seat" style="left:111px;top:194px"></div><div class="seat" style="left:154px;top:194px"></div><div class="so" style="left:109px;top:64.5px;width:35px;height:10px;border-width:1px 0 0 0;border-radius:9px 9px 0 0/5px 5px 0 0"></div><div class="so" style="left:108px;top:216.5px;width:35px;height:10px;border-width:0 0 1px 0;border-radius:0 0 9px 9px/0 0 5px 5px"></div><div class="so" style="left:152px;top:64.5px;width:35px;height:10px;border-width:1px 0 0 0;border-radius:9px 9px 0 0/5px 5px 0 0"></div><div class="so" style="left:151px;top:216.5px;width:35px;height:10px;border-width:0 0 1px 0;border-radius:0 0 9px 9px/0 0 5px 5px"></div><div class="so" style="left:65.5px;top:106px;width:10px;height:35px;border-width:0 0 0 1px;border-radius:5px 0 0 5px/9px 0 0 9px"></div><div class="so" style="left:220.5px;top:106px;width:10px;height:35px;border-width:0 1px 0 0;border-radius:0 5px 5px 0/0 9px 9px 0"></div><div class="so" style="left:65.5px;top:150px;width:10px;height:35px;border-width:0 0 0 1px;border-radius:5px 0 0 5px/9px 0 0 9px"></div><div class="so" style="left:220.5px;top:150px;width:10px;height:35px;border-width:0 1px 0 0;border-radius:0 5px 5px 0/0 9px 9px 0"></div><div class="tbl"></div><div class="logo"><div class="a" style="left:9px;top:10px;font:italic bold 6px/7px 'Liberation Sans';color:#1a55a8;letter-spacing:-0.3px">RHB<span style="color:#e8323a;font-style:normal">&#9670;</span></div><div class="a" style="left:8px;top:18px;width:42px;font:bold 8.6px/8.5px 'Liberation Sans';color:#1a64b4;letter-spacing:-0.1px;white-space:nowrap">GET YOUR<br>HACK ON</div><div class="a" style="left:8px;top:37px;width:40px;height:7px;background:#e0393a;font:bold 4px/7px 'Liberation Sans';color:#fff;text-align:center;white-space:nowrap">ASEAN EDITION 2023</div></div><div class="av" style="left:196px;top:109px;background:#d04a36"></div><div class="join">Join</div></div>
<div class="a" style="left:1286px;top:70px;width:12px;height:1324px;border-radius:6px;background:#1c1b21"></div>
<div class="a" style="left:1298px;top:70px;width:34px;height:1324px;background:#0f0f12"></div>
<div class="a" style="left:1332px;top:70px;width:368px;height:1324px;background:#1c1b21"></div>
<div class="a" style="left:0;top:0;width:1700px;height:70px;background:#1d1c21"></div>
<div class="a" style="left:0;top:70px;width:1332px;height:8px;background:linear-gradient(180deg,rgba(0,0,0,.28),rgba(0,0,0,0))"></div>
</div>

<div class="a" style="left:84px;top:63px;width:40px;height:40px;border-radius:9px;background:#f6f2f2;padding:4px"><div style="width:32px;height:32px;background:linear-gradient(135deg,#7fd2ea 0%,#5cbde2 55%,#2a80c4 85%,#1a62b0 100%);position:relative;overflow:hidden"><div class="a" style="left:4px;top:5px;font:italic bold 4px/5px 'Liberation Sans';color:#1a55a8">RHB<span style="color:#e8323a;font-style:normal">&#9670;</span></div><div class="a" style="left:4px;top:10px;font:bold 5.4px/5.6px 'Liberation Sans';color:#2a6cc0;white-space:nowrap;letter-spacing:-0.1px">GET YOUR<br>HACK ON</div><div class="a" style="left:4px;top:22px;width:24px;height:4px;background:#e0393a"></div></div></div>
<div class="a" style="left:138px;top:74px;font-weight:bold;font-size:15px;line-height:20px;color:#f2f2f5;white-space:nowrap">RHB Get Your Hack On ASEAN 2023</div>
<div class="a" style="left:405px;top:72px;width:1px;height:23px;background:#3a3941"></div>
<div class="a" style="left:422px;top:60px;width:154px;height:46px;border-radius:8px;background:#29283180;border:1px solid #4a4954;background:#2a2932"></div>
<svg class="a" style="left:437px;top:75px" width="16" height="16" viewBox="0 0 16 16"><rect x="0.5" y="1.5" width="15" height="14" rx="3" fill="#6d9ef0"/><rect x="0.5" y="1.5" width="15" height="3.5" rx="1.5" fill="#6d9ef0"/><g fill="#2a2932"><rect x="3" y="7" width="2" height="2"/><rect x="7" y="7" width="2" height="2"/><rect x="11" y="7" width="2" height="2"/><rect x="3" y="11" width="2" height="2"/><rect x="7" y="11" width="2" height="2"/></g><rect x="3.5" y="0" width="1.5" height="3" fill="#6d9ef0"/><rect x="11" y="0" width="1.5" height="3" fill="#6d9ef0"/></svg>
<div class="a" style="left:463px;top:74px;font-weight:bold;font-size:14.2px;line-height:20px;color:#f2f2f5;white-space:nowrap">View Schedule</div>
<svg class="a" style="left:1523px;top:64px" width="22" height="20" viewBox="0 0 22 20"><g fill="#c3c2cc"><circle cx="7" cy="4.5" r="4.5"/><circle cx="16.5" cy="6" r="3.5"/><path d="M0 13.5a3 3 0 0 1 3-3h8a3 3 0 0 1 3 3V15a5 5 0 0 1-5 5H5a5 5 0 0 1-5-5z"/><path d="M14.5 11h5a2.5 2.5 0 0 1 2.5 2.5v2a4.5 4.5 0 0 1-4.5 4.5h-1.2A6.5 6.5 0 0 0 16 15v-2a4 4 0 0 0-1.5-2z"/></g></svg>
<div class="a" style="left:1503px;top:92px;width:62px;text-align:center;font-weight:bold;font-size:10px;line-height:13px;color:#c3c2cc">People</div>
<svg class="a" style="left:1587px;top:64px" width="23" height="19" viewBox="0 0 23 19"><g fill="#c3c2cc"><path d="M8.5 0C13.2 0 17 3.2 17 7.2c0 4-3.8 7.2-8.5 7.2c-.9 0-1.8-.1-2.6-.3L1 16l1.6-3.6C1 11.1 0 9.3 0 7.2C0 3.2 3.8 0 8.5 0z"/><circle cx="18" cy="13.5" r="5"/><path d="M14 17h8v2h-8z"/></g><g fill="#1d1c21"><rect x="4.5" y="5" width="8" height="1.6" rx=".8"/><rect x="4.5" y="8.3" width="5" height="1.6" rx=".8"/><path d="M18 7.8a5.8 5.8 0 1 0 .01 0z" fill="none" stroke="#1d1c21" stroke-width="1.3"/></g></svg>
<div class="a" style="left:1563px;top:92px;width:70px;text-align:center;font-weight:bold;font-size:10px;line-height:13px;color:#c3c2cc">Messages</div>
<svg class="a" style="left:1652px;top:62px" width="20" height="22" viewBox="0 0 20 22"><g fill="#c3c2cc"><path d="M10 0.5c4.2 0 7 3.2 7 7.3v5.5l2.6 3.1c.4.5.1 1.1-.5 1.1H0.9c-.6 0-.9-.6-.5-1.1L3 13.3V7.8C3 3.7 5.8.5 10 .5z"/><path d="M7 18.5h6a3 3 0 0 1-6 0z"/></g></svg>
<div class="a" style="left:1632px;top:92px;width:60px;text-align:center;font-weight:bold;font-size:10px;line-height:13px;color:#c3c2cc">Alerts</div>
<div class="a" style="left:1714px;top:62px;width:24px;height:24px;border-radius:5px;overflow:hidden;background:linear-gradient(180deg,#e8e6e4 0%,#d9d2cc 100%)">
 <div class="a" style="left:6px;top:3px;width:12px;height:5px;border-radius:6px 6px 2px 2px;background:#7a4a2a"></div>
 <div class="a" style="left:7px;top:6px;width:10px;height:11px;border-radius:4px 4px 5px 5px;background:#d8a48a"></div>
 <div class="a" style="left:7px;top:9px;width:10px;height:2px;background:#333"></div>
 <div class="a" style="left:3px;top:18px;width:18px;height:8px;border-radius:8px 8px 0 0;background:#8fb4c8"></div>
</div>
<div class="a" style="left:1690px;top:92px;width:72px;text-align:center;font-weight:bold;font-size:10px;line-height:13px;color:#c3c2cc">Muhammad</div>
<div class="a" style="left:1768px;top:54px;width:4px;height:4px;border-radius:2px;background:#6a6870"></div>
<div class="a" style="left:1768px;top:60px;width:4px;height:4px;border-radius:2px;background:#6a6870"></div>
<div class="a" style="left:1768px;top:66px;width:4px;height:4px;border-radius:2px;background:#6a6870"></div>




<div class="a" style="left:1445px;top:130px;width:1px;height:1312px;background:#2c2b33"></div>
<div class="a" style="left:1444.5px;top:130px;width:1.5px;height:44px;background:#6a9ef2"></div>
<svg class="a" style="left:1410px;top:140px" width="24" height="22" viewBox="0 0 24 22"><path d="M8 2.5h13.5a1 1 0 0 1 1 1v10.5a1 1 0 0 1-1 1h-0.5l-1.5 2.2-0.8-2.2H8a1 1 0 0 1-1-1V3.5a1 1 0 0 1 1-1z" fill="#6a9ef2"/><path d="M1.8 6.8h5.2v7.5a1.2 1.2 0 0 0 1.2 1.2h8.8v1.8a1 1 0 0 1-1 1H5.5l-2.5 2.2v-2.2H1.8a1 1 0 0 1-1-1V7.8a1 1 0 0 1 1-1z" fill="#6a9ef2"/><path d="M7 7v7.3a1.2 1.2 0 0 0 1.2 1.2H17" fill="none" stroke="#1c1b21" stroke-width="0.9"/></svg>
<svg class="a" style="left:1410px;top:184px" width="24" height="23" viewBox="0 0 24 23" fill="none" stroke="#b8b7c0" stroke-width="1.4"><path d="M9.5 1.5c4.4 0 8 3 8 6.8s-3.6 6.8-8 6.8c-1 0-2-.2-2.9-.5L2.5 16l1.3-3.3C2.4 11.5 1.5 10 1.5 8.3 1.5 4.5 5.1 1.5 9.5 1.5z"/><circle cx="9.5" cy="8" r="3"/><path d="M11.5 10l2 2"/><path d="M18.5 9.5c2.4 1 4 3 4 5.3 0 1.4-.6 2.7-1.6 3.7l1 2.8-3.3-1.3c-.8.3-1.7.4-2.6.4-2.3 0-4.3-.9-5.6-2.3"/><path d="M15.5 18l1.5-4 1.5 4M16 16.8h2"/></svg>
<svg class="a" style="left:1411px;top:228px" width="22" height="24" viewBox="0 0 22 24" fill="none" stroke="#b8b7c0" stroke-width="1.5"><rect x="1" y="13" width="4.5" height="10" rx="2.25"/><rect x="8.7" y="1" width="4.5" height="22" rx="2.25"/><rect x="16.4" y="7" width="4.5" height="16" rx="2.25"/></svg>
<div class="a" style="left:1462px;top:135px;font-weight:bold;font-size:15.5px;line-height:20px;color:#f4f4f6">Chat</div>
<div class="a" style="left:1462px;top:158px;font-size:10.6px;line-height:14px;color:#b9b8c0;white-space:nowrap">Enjoy interacting with the people in this session!</div>
<div class="a" style="left:1746px;top:184px;width:8px;height:1174px;border-radius:4px;background:#2a2931"></div>
<div class="a" style="left:1458px;top:207px;width:32px;height:32px;border-radius:7px;background:#d42a35;overflow:hidden">
 <div class="a" style="left:0;top:10px;width:32px;text-align:center;font:bold 6.5px/8px 'Liberation Sans';color:#fff;letter-spacing:-0.4px;transform:scaleX(0.85)">JOMHACK</div>
 <div class="a" style="left:7px;top:19.5px;width:18px;height:1px;background:#e89a9a"></div>
</div>
<div class="a" style="left:1502px;top:205px;font-size:12.5px;line-height:16px;color:#bdbcc4;white-space:nowrap">Samuel Cheng</div>
<div class="a" style="left:1502px;top:221px;font-size:12.5px;line-height:16px;color:#bdbcc4;white-space:nowrap">Coordinator , JomHack&nbsp;&nbsp;&middot; 20 mins ago</div>
<div class="a" style="left:1502px;top:241px;width:236px;height:58px;border-radius:9px;background:#2d2c36"></div>
<div class="a" style="left:1513px;top:254px;font-size:12.6px;line-height:16px;color:#e8e8ec;white-space:nowrap">Team 19 -Three Dummy In A Group<br>please standby</div>
<div class="a" style="left:1504px;top:289px;width:40px;height:22px;border-radius:11px;background:#141418"></div>
<svg class="a" style="left:1512px;top:293px" width="12" height="14" viewBox="0 0 12 14"><path d="M3.5 6L5.5 1.2C6.2 0.2 7.3 0.8 7.1 2L6.6 5H10.2C11.2 5 11.8 5.9 11.5 6.8L10 12.6C9.8 13.3 9.2 13.8 8.4 13.8H3.5z" fill="#f5b03a"/><rect x="0.5" y="6" width="3" height="7.8" rx="1" fill="#e8902a"/><path d="M6.5 7.5h4M6.5 9.5h4M6.5 11.5h3.5" stroke="#d07a20" stroke-width="0.8"/></svg>
<div class="a" style="left:1528px;top:293px;font-size:11px;line-height:14px;color:#ddd">1</div>
<div class="a" style="left:1458px;top:1262px;width:32px;height:30px;border-radius:7px;overflow:hidden;background:linear-gradient(90deg,#c89888 0%,#e8d0c0 30%,#d8b8a8 60%,#a87868 100%)"><div class="a" style="left:9px;top:5px;width:14px;height:16px;border-radius:7px;background:#6a3020"></div><div class="a" style="left:11px;top:8px;width:9px;height:10px;border-radius:5px;background:#e0b090"></div><div class="a" style="left:5px;top:18px;width:22px;height:14px;border-radius:8px 8px 0 0;background:linear-gradient(90deg,#a04020,#f0e8e0 45%,#f0e8e0 60%,#b05030)"></div></div>
<div class="a" style="left:1502px;top:1259px;font-size:12.5px;line-height:16px;color:#bdbcc4;white-space:nowrap">Meg Y</div>
<div class="a" style="left:1545px;top:1261px;width:70px;height:15px;border-radius:2px;background:#0a62c2;color:#fff;font-weight:bold;font-size:9.5px;line-height:13px;text-align:center">ORGANIZER</div>
<div class="a" style="left:1502px;top:1276px;font-size:12.5px;line-height:16px;color:#bdbcc4;white-space:nowrap">Team, Jomhack&nbsp;&nbsp;&middot; 2 mins ago</div>
<div class="a" style="left:1502px;top:1296px;width:205px;height:42px;border-radius:9px;background:#2d2c36"></div>
<div class="a" style="left:1513px;top:1309px;font-size:12.6px;line-height:16px;color:#e8e8ec;white-space:nowrap">Team Teamwork - you're up next</div>
<div class="a" style="left:1460px;top:1359px;width:284px;height:64px;border-radius:8px;border:1px solid #5a5966"></div>
<div class="a" style="left:1473px;top:1371px;font-size:12.6px;line-height:16px;color:#7b7a83;white-space:nowrap">What would you like to share?</div>
<div class="a" style="left:1474px;top:1398px;width:15px;height:12px;border-radius:3px;background:#c9c8d0;font:bold 6px/12px 'Liberation Sans';color:#333;text-align:center">GIF</div>
<svg class="a" style="left:1499px;top:1397px" width="14" height="14" viewBox="0 0 14 14"><circle cx="7" cy="7" r="6.2" fill="none" stroke="#c9c8d0" stroke-width="1.5"/><circle cx="4.8" cy="5.2" r="1" fill="#c9c8d0"/><circle cx="9.2" cy="5.2" r="1" fill="#c9c8d0"/><path d="M3.6 7.6h6.8a3.4 3.4 0 0 1-6.8 0z" fill="#c9c8d0"/></svg>
<svg class="a" style="left:1694px;top:1396px" width="18" height="17" viewBox="0 0 18 17"><path d="M0.5 0.5L17.5 8.5L0.5 16.5L3.5 8.5z" fill="#5b92f0"/><path d="M3.5 8.5L17.5 8.5L0.5 16.5z" fill="#4a7ed8"/></svg>
<div class="a" style="left:1719px;top:1396px;width:44px;height:44px;border-radius:22px;background:#6a4ff2;box-shadow:0 2px 8px rgba(0,0,0,.4)"></div>
<div class="a" style="left:1729.5px;top:1406.5px;width:23px;height:23px;border-radius:12px;border:1.3px solid #fff;color:#fff;font-weight:bold;font-size:13px;line-height:21px;text-align:center">?</div>

<div class="a" style="left:66px;top:309px;width:1700px;height:952px;border-radius:14px;background:#2e2d38"></div>

<div class="a" style="left:86px;top:330px;font-size:12.3px;line-height:16px;color:#ececf0;white-space:nowrap">Team 52 - Halcyon</div>
<div class="a" style="left:205px;top:331px;width:16px;height:16px;background:linear-gradient(135deg,#7dd0e8,#2f86c8);overflow:hidden"><div class="a" style="left:2px;top:4px;width:12px;height:5px;background:#3f8ed0;opacity:.7"></div><div class="a" style="left:2px;top:10px;width:12px;height:2px;background:#e03a3a"></div></div>
<svg class="a" style="left:1480px;top:331px" width="18" height="15" viewBox="0 0 18 15" fill="none" stroke="#5b92f0" stroke-width="1.2" stroke-linecap="round"><path d="M1.20 7.66A8.3 8.3 0 0 1 16.80 7.66 M3.36 8.45A6 6 0 0 1 14.64 8.45 M5.52 9.23A3.7 3.7 0 0 1 12.48 9.23"/><path d="M7.6 13.2L12.4 4.2L10.2 14z" fill="#5b92f0" stroke-width="0.8"/></svg>
<div class="a" style="left:1504.5px;top:331px;font-weight:bold;font-size:13px;line-height:16px;color:#5b92f0;white-space:nowrap">Facing problems?</div>
<svg class="a" style="left:1632px;top:331px" width="16" height="16" viewBox="0 0 16 16" fill="none" stroke="#e8e8ec" stroke-width="1.5"><path d="M5 5.5V3a2 2 0 0 1 2-2h6a2 2 0 0 1 2 2v6a2 2 0 0 1-2 2h-2.5"/><path d="M8 8L1.5 14.5M1.5 9.5v5h5"/></svg>
<svg class="a" style="left:1677px;top:331px" width="14" height="14" viewBox="0 0 14 14" fill="none" stroke="#e8e8ec" stroke-width="1.5"><path d="M1 5V1h4M9 1h4v4M13 9v4H9M5 13H1V9"/><path d="M1 1l3.5 3.5M13 1L9.5 4.5M13 13L9.5 9.5M1 13l3.5-3.5"/></svg>
<svg class="a" style="left:1721px;top:332px" width="14" height="14" viewBox="0 0 14 14" fill="none" stroke="#e8e8ec" stroke-width="1.6"><path d="M1 1l12 12M13 1L1 13"/></svg>
<div class="a" style="left:82px;top:360px;width:1668px;height:2px;background:#4a4955"></div>
<div class="a" style="left:1561px;top:363px;width:1px;height:888px;background:#3e3d48"></div>
<div class="a" style="left:82px;top:369px;width:1307px;height:825px;border-radius:8px;background:#000;overflow:hidden">
 <div class="a" style="left:498px;top:8px;width:311px;height:23px;background:#6a4ff4;border-radius:2px;color:#fff;font-weight:bold;font-size:13.6px;line-height:23px;text-align:center;white-space:nowrap">Screen Share by Nur Faidz Hazirah Nor'Azman</div>
 <div class="a" style="left:0;top:59px;width:1307px;height:23px;background:#e6dfdb"></div>
<div class="a" style="left:494px;top:61px;width:163px;height:21px;background:#fff;border-radius:6px 6px 0 0"></div>
<svg class="a" style="left:13px;top:64.5px" width="12" height="12" viewBox="0 0 12 12"><rect x="0.5" y="0.5" width="11" height="11" rx="2.5" fill="#f7d21c"/><path d="M3 10L5 2M5.5 10L7.5 2M8 10L10 2" stroke="#111" stroke-width="1.6"/></svg>
<div class="a" style="left:30px;top:65px;font-size:7.9px;line-height:11px;color:#4e4e4e;white-space:nowrap;overflow:hidden">RHB GYHO 2023 (Team Halcyon)</div>
<div class="a" style="left:153.7px;top:64px;font-size:11px;line-height:12px;color:#333">&#215;</div>
<div class="a" style="left:168.7px;top:63px;width:1px;height:14px;background:#9a9390"></div>
<svg class="a" style="left:177px;top:64px" width="8" height="12" viewBox="0 0 8 12"><path d="M0 2a2 2 0 0 1 2-2h2v4H2a2 2 0 0 1-2-2z" fill="#f24e1e"/><path d="M4 0h2a2 2 0 0 1 0 4H4z" fill="#ff7262"/><path d="M0 6a2 2 0 0 1 2-2h2v4H2a2 2 0 0 1-2-2z" fill="#a259ff"/><circle cx="6" cy="6" r="2" fill="#1abcfe"/><path d="M0 10a2 2 0 0 1 2-2h2v2a2 2 0 0 1-4 0z" fill="#0acf83"/></svg>
<div class="a" style="left:192.7px;top:65px;font-size:7.9px;line-height:11px;color:#4e4e4e;white-space:nowrap;overflow:hidden">System Flow Draft – Figma</div>
<div class="a" style="left:316.4px;top:64px;font-size:11px;line-height:12px;color:#333">&#215;</div>
<div class="a" style="left:331px;top:63px;width:1px;height:14px;background:#9a9390"></div>
<svg class="a" style="left:339px;top:65px" width="11" height="10" viewBox="0 0 11 10"><path d="M0.8 9.2L3.8 3.2L5.5 6L7.2 3.2L10.2 9.2z" fill="none" stroke="#41b883" stroke-width="1.5" stroke-linejoin="round"/></svg>
<div class="a" style="left:355px;top:65px;font-size:7.9px;line-height:11px;color:#4e4e4e;white-space:nowrap;overflow:hidden">client</div>
<div class="a" style="left:479.5px;top:64px;font-size:11px;line-height:12px;color:#333">&#215;</div>
<svg class="a" style="left:501.8px;top:65px" width="11" height="10" viewBox="0 0 11 10"><path d="M0.8 9.2L3.8 3.2L5.5 6L7.2 3.2L10.2 9.2z" fill="none" stroke="#41b883" stroke-width="1.5" stroke-linejoin="round"/></svg>
<div class="a" style="left:518px;top:65px;font-size:7.9px;line-height:11px;color:#4e4e4e;white-space:nowrap;overflow:hidden">client</div>
<div class="a" style="left:641.4px;top:64px;font-size:11px;line-height:12px;color:#333">&#215;</div>
<svg class="a" style="left:665px;top:64.5px" width="11" height="11" viewBox="0 0 11 11"><rect x="0.5" y="0.5" width="10" height="10" rx="1.5" fill="none" stroke="#f5b82e" stroke-width="1.4"/><rect x="2.5" y="2.5" width="6" height="6" fill="#fbe08a"/></svg>
<div class="a" style="left:680.7px;top:65px;font-size:7.9px;line-height:11px;color:#4e4e4e;white-space:nowrap;overflow:hidden">CYNO: Turn your money life into</div>
<div class="a" style="left:804px;top:64px;font-size:11px;line-height:12px;color:#333">&#215;</div>
<div class="a" style="left:819.6px;top:63px;width:1px;height:14px;background:#9a9390"></div>
<div class="a" style="left:829px;top:62px;font-size:14px;line-height:14px;color:#333">+</div>
<svg class="a" style="left:1192px;top:66px" width="10" height="6" viewBox="0 0 10 6"><path d="M1 1l4 4 4-4" fill="none" stroke="#444" stroke-width="1"/></svg>
<div class="a" style="left:1223px;top:69px;width:10px;height:1px;background:#444"></div>
<div class="a" style="left:1256px;top:65px;width:8px;height:8px;border:1px solid #444"></div><div class="a" style="left:1258px;top:63px;width:8px;height:8px;border-top:1px solid #444;border-right:1px solid #444"></div>
<svg class="a" style="left:1286px;top:64px" width="10" height="10" viewBox="0 0 10 10"><path d="M1 1l8 8M9 1l-8 8" stroke="#444" stroke-width="1.1"/></svg>
<div class="a" style="left:0;top:82px;width:1307px;height:24px;background:#fff"></div>
<div class="a" style="left:74px;top:86px;width:1115px;height:17px;border-radius:9px;background:#e2e2e4"></div>
<svg class="a" style="left:9px;top:88px" width="12" height="12" viewBox="0 0 12 12" fill="none" stroke="#333" stroke-width="1.3"><path d="M11 6H1.5M6 1.5L1.5 6 6 10.5"/></svg>
<svg class="a" style="left:31px;top:88px" width="12" height="12" viewBox="0 0 12 12" fill="none" stroke="#999" stroke-width="1.3"><path d="M1 6h9.5M6 1.5L10.5 6 6 10.5"/></svg>
<svg class="a" style="left:53px;top:88px" width="12" height="12" viewBox="0 0 12 12" fill="none" stroke="#333" stroke-width="1.4"><path d="M10 6a4 4 0 1 1-1.2-2.9"/><path d="M9.5 1v3h-3" /></svg>
<svg class="a" style="left:80px;top:89px" width="11" height="11" viewBox="0 0 11 11" fill="none" stroke="#555" stroke-width="1"><circle cx="5.5" cy="5.5" r="4.5"/><path d="M5.5 4.8v3.5M5.5 2.8v.9"/></svg>
<div class="a" style="left:96.5px;top:88px;font-size:9.5px;line-height:12px;color:#222;white-space:nowrap">localhost<span style="color:#666">:3000/chatbot</span></div>
<svg class="a" style="left:1150px;top:88px" width="12" height="12" viewBox="0 0 12 12" fill="none" stroke="#555" stroke-width="1"><path d="M1 4v7h9V8"/><path d="M4 8c0-3 2-4.5 5-4.5V1.5l2.5 2.5L9 6.5V5c-2.5 0-4 1-5 3z"/></svg>
<svg class="a" style="left:1171px;top:88px" width="12" height="12" viewBox="0 0 12 12" fill="none" stroke="#555" stroke-width="1.1"><path d="M6 1l1.5 3.2 3.5.4-2.6 2.3.8 3.5L6 8.6 2.8 10.4l.8-3.5L1 4.6l3.5-.4z"/></svg>
<div class="a" style="left:1199px;top:88px;width:11px;height:11px;border-radius:6px;background:#15c39a"></div>
<svg class="a" style="left:1220px;top:88px" width="12" height="12" viewBox="0 0 12 12"><path d="M2 4h2a1.5 1.5 0 0 1 3 0h2v2.5a1.5 1.5 0 0 1 0 3V11H6.5a1.5 1.5 0 0 0-3 0H2z" fill="#222"/></svg>
<div class="a" style="left:1243px;top:89px;width:9px;height:10px;border:1.5px solid #222;border-right-width:4px"></div>
<div class="a" style="left:1263px;top:87px;width:14px;height:14px;border-radius:7px;background:radial-gradient(circle at 50% 40%,#e8d0c8,#b89080)"></div>
<div class="a" style="left:1292px;top:89px;width:2px;height:2px;background:#333;box-shadow:0 4px 0 #333,0 8px 0 #333"></div>
<div class="a" style="left:0;top:106px;width:1307px;height:20px;background:#f9f9f9;border-bottom:1px solid #d6d6d6"></div>
<div class="a" style="left:497.6px;top:112.5px;font-size:8.2px;line-height:10px;color:#444;white-space:nowrap">Dimensions: iPhone 12 Pro &#9662;</div>
<div class="a" style="left:615px;top:110px;width:32px;height:14px;background:#ececec;border:1px solid #e0e0e0"></div>
<div class="a" style="left:619px;top:112.5px;font-size:8.2px;line-height:10px;color:#444;white-space:nowrap;color:#666">390</div>
<div class="a" style="left:653px;top:113px;font-size:8.2px;line-height:10px;color:#444;white-space:nowrap">x</div>
<div class="a" style="left:660px;top:110px;width:32px;height:14px;background:#ececec;border:1px solid #e0e0e0"></div>
<div class="a" style="left:664px;top:112.5px;font-size:8.2px;line-height:10px;color:#444;white-space:nowrap;color:#666">844</div>
<div class="a" style="left:705px;top:112.5px;font-size:8.2px;line-height:10px;color:#444;white-space:nowrap">100% &#9662;</div>
<div class="a" style="left:741px;top:112.5px;font-size:8.2px;line-height:10px;color:#444;white-space:nowrap">No throttling &#9662;</div>
<div class="a" style="left:813px;top:111px;width:9px;height:9px;border-radius:5px;border:1px solid #666"></div>
<div class="a" style="left:1293px;top:112px;width:2px;height:2px;background:#555;box-shadow:0 3px 0 #555,0 6px 0 #555"></div>
<div class="a" style="left:0;top:126px;width:1307px;height:11px;background:#dfe0e3"></div>
<div class="a" style="left:164px;top:126px;width:1px;height:11px;background:#f2f2f2"></div>
<div class="a" style="left:305px;top:126px;width:1px;height:11px;background:#f2f2f2"></div>
<div class="a" style="left:392px;top:126px;width:1px;height:11px;background:#f2f2f2"></div>
<div class="a" style="left:510px;top:126px;width:1px;height:11px;background:#f2f2f2"></div>
<div class="a" style="left:526px;top:126px;width:1px;height:11px;background:#f2f2f2"></div>
<div class="a" style="left:546px;top:126px;width:1px;height:11px;background:#f2f2f2"></div>
<div class="a" style="left:762px;top:126px;width:1px;height:11px;background:#f2f2f2"></div>
<div class="a" style="left:781px;top:126px;width:1px;height:11px;background:#f2f2f2"></div>
<div class="a" style="left:797px;top:126px;width:1px;height:11px;background:#f2f2f2"></div>
<div class="a" style="left:913px;top:126px;width:1px;height:11px;background:#f2f2f2"></div>
<div class="a" style="left:1001px;top:126px;width:1px;height:11px;background:#f2f2f2"></div>
<div class="a" style="left:1143px;top:126px;width:1px;height:11px;background:#f2f2f2"></div>
<div class="a" style="left:0;top:137px;width:1307px;height:630px;background:#f8f8f9"></div><div class="a" style="left:521.0px;top:152.5px;width:265px;height:575px;background:#fff;box-shadow:0 0 0 1px #ececec,0 2px 6px rgba(0,0,0,.05)"></div>
<div class="a" style="left:521.0px;top:684.0px;width:265px;height:1px;background:#e8e8ea"></div>
<div class="a" style="left:537.0px;top:169.0px;width:233px;height:504px;border-radius:11px;overflow:hidden;background:#050407"><svg class="a" style="left:0;top:0" width="233" height="504" viewBox="0 0 233 504"><defs><filter id="fb" x="-20%" y="-20%" width="140%" height="140%"><feGaussianBlur stdDeviation="2"/></filter><linearGradient id="fc" x1="0" y1="0" x2="0" y2="1"><stop offset="0" stop-color="#a03810"/><stop offset="0.4" stop-color="#7a2a0c"/><stop offset="1" stop-color="#3a1406"/></linearGradient></defs><g filter="url(#fb)"><path d="M162 96 L176 90 L186 98 L200 88 L214 94 L226 86 L233 96 L233 170 L210 160 L190 150 L170 130z" fill="#d0481c"/><path d="M104 186 L108 150 L118 132 L128 142 L136 124 L150 136 L160 118 L176 128 L190 112 L206 126 L220 118 L233 130 L233 190 z" fill="#ee6a24"/><path d="M110 186 L116 160 L134 150 L150 164 L170 152 L190 166 L204 160 L214 186z" fill="#ff9c2c"/><path d="M134 186 L146 170 L170 176 L186 168 L196 186z" fill="#ffc040"/><path d="M116 124 L146 120 L172 136 L160 162 L126 156z" fill="#120604"/><path d="M176 134 L196 124 L210 140 L198 150 L180 146z" fill="#2a0e06"/><path d="M118 222 L150 218 L190 220 L228 222 L233 234 L116 234z" fill="#ffe020"/><path d="M134 268 L170 266 L210 268 L233 270 L233 282 L130 282z" fill="#fff01a"/><path d="M226 150 L233 150 L233 440 L228 430z" fill="url(#fc)"/><path d="M96 446 L130 440 L170 444 L215 440 L220 456 L96 456z" fill="#d8521a" opacity=".9"/><path d="M100 494 L140 490 L190 494 L233 492 L233 504 L100 504z" fill="#ff7a1a"/></g></svg></div>
<div class="a" style="left:583.0px;top:179.0px;width:176px;height:84px;background:#fff;border-radius:0 0 10px 10px;overflow:hidden"><div class="a" style="left:11px;top:-4px;font-size:9.4px;line-height:13.5px;color:#555;white-space:nowrap">the person receiving the money gets<br>a pretend certificate to show that<br>they have money. The person can<br>use this pretend certificate to buy<br>things or make investments with the<br>money just like real money.</div></div>
<div class="a" style="left:548px;top:179px;width:22px;height:18px;overflow:hidden"><svg class="a" style="left:0;top:-8px" width="22" height="26" viewBox="0 0 26 30" preserveAspectRatio="none"><ellipse cx="12" cy="11" rx="11" ry="10.5" fill="#ee8630"/><ellipse cx="10.5" cy="13" rx="7.5" ry="6.5" fill="#f3ede8"/><circle cx="8" cy="12.5" r="1" fill="#333"/><circle cx="13" cy="12.5" r="1" fill="#333"/><path d="M17 2l3 2.5 3-1.5-1.5 3z" fill="#1a9a80"/><rect x="8" y="20.5" width="8" height="4" rx="1.5" fill="#d87a8a"/><ellipse cx="12.5" cy="27" rx="8.5" ry="2.3" fill="#b8bcc4"/></svg></div>
<div class="a" style="left:603.0px;top:275.0px;width:120px;height:24px;background:#d2f2ee;border-radius:12px"><div class="a" style="left:0;right:0;top:6px;text-align:center;font-size:9.4px;line-height:13.5px;color:#555;white-space:nowrap;line-height:12px;color:#555">review my spending pls</div></div>
<div class="a" style="left:732.0px;top:273.0px;width:27px;height:27px;background:#1fb57a;border-radius:14px"><div class="a" style="left:0;right:0;top:7px;text-align:center;font-size:9px;line-height:12px;color:#178a5c">A</div></div>
<div class="a" style="left:548px;top:314px;width:24px;height:30px;overflow:hidden"><svg class="a" style="left:0;top:0px" width="24" height="30" viewBox="0 0 26 30" preserveAspectRatio="none"><ellipse cx="12" cy="11" rx="11" ry="10.5" fill="#ee8630"/><ellipse cx="10.5" cy="13" rx="7.5" ry="6.5" fill="#f3ede8"/><circle cx="8" cy="12.5" r="1" fill="#333"/><circle cx="13" cy="12.5" r="1" fill="#333"/><path d="M17 2l3 2.5 3-1.5-1.5 3z" fill="#1a9a80"/><rect x="8" y="20.5" width="8" height="4" rx="1.5" fill="#d87a8a"/><ellipse cx="12.5" cy="27" rx="8.5" ry="2.3" fill="#b8bcc4"/></svg></div>
<div class="a" style="left:583.0px;top:316.0px;width:57px;height:24px;background:#fff;border-radius:10px"><div class="a" style="left:11px;top:6px;font-size:9.4px;line-height:13.5px;color:#555;white-space:nowrap;line-height:12px">Let&#39;s go!</div></div>
<div class="a" style="left:548px;top:360px;width:27px;height:31px;overflow:hidden"><svg class="a" style="left:0;top:0px" width="27" height="31" viewBox="0 0 26 30" preserveAspectRatio="none"><ellipse cx="12" cy="11" rx="11" ry="10.5" fill="#ee8630"/><ellipse cx="10.5" cy="13" rx="7.5" ry="6.5" fill="#f3ede8"/><circle cx="8" cy="12.5" r="1" fill="#333"/><circle cx="13" cy="12.5" r="1" fill="#333"/><path d="M17 2l3 2.5 3-1.5-1.5 3z" fill="#1a9a80"/><rect x="8" y="20.5" width="8" height="4" rx="1.5" fill="#d87a8a"/><ellipse cx="12.5" cy="27" rx="8.5" ry="2.3" fill="#b8bcc4"/></svg></div>
<div class="a" style="left:583.0px;top:355.0px;width:176px;height:38px;background:#fff;border-radius:10px"><div class="a" style="left:11px;top:6px;font-size:9.4px;line-height:13.5px;color:#555;white-space:nowrap">Aiyya, you ordered Starbucks a total<br>of 12 times this week.</div></div>
<div class="a" style="left:583.0px;top:401.5px;width:176px;height:38px;background:#fff;border-radius:10px"><div class="a" style="left:11px;top:6px;font-size:9.4px;line-height:13.5px;color:#555;white-space:nowrap">You order one more and I&#39;ll treat it<br>as a utility bill.</div></div>
<div class="a" style="left:583.5px;top:448.0px;width:175px;height:164px;background:#fff;border-radius:10px"></div>
<div class="a" style="left:594.0px;top:453.0px;width:154px;height:154px;background:linear-gradient(90deg,#a89888 0%,#d4c8bc 18%,#c8bcb0 38%,#a09080 52%,#7a6858 75%,#4a3e34 92%,#2e2620 100%)"><div class="a" style="left:0;top:0;width:154px;height:5px;background:#6a5a4a"></div><div class="a" style="left:2px;top:18px;width:12px;height:40px;background:#c07058;opacity:.55"></div><div class="a" style="left:26px;top:26px;width:22px;height:30px;background:#d08a78;opacity:.55"></div><div class="a" style="left:38px;top:50px;width:12px;height:30px;background:#b86a58;opacity:.35"></div><div class="a" style="left:75px;top:4px;width:56px;height:80px;border-radius:26px 26px 10px 10px;background:#4a3428"></div><div class="a" style="left:86px;top:12px;width:28px;height:40px;border-radius:14px;background:#9a7460"></div><div class="a" style="left:24px;top:56px;width:130px;height:98px;border-radius:62px 50px 0 0;background:radial-gradient(ellipse 46% 50% at 62% 50%,#eee4da 0%,#cfc2b4 45%,#8e7e6e 80%,#6a5a4c 100%)"></div><div class="a" style="left:0;top:136px;width:154px;height:18px;background:linear-gradient(180deg,rgba(58,48,40,0),#3a3028)"></div><div class="a" style="left:64px;top:136px;width:14px;height:14px;border-radius:7px;border:1.5px solid #ccc"></div></div>
<div class="a" style="left:548.0px;top:623.5px;width:211px;height:39px;background:#fff;border-radius:10px"></div>
<div class="a" style="left:558.0px;top:628.5px;width:147px;height:28px;border:1.6px solid #2d7cc4;border-radius:9px;background:#fff"><div class="a" style="left:11px;top:6px;width:1px;height:14px;background:#333"></div></div>
<div class="a" style="left:715.0px;top:629.0px;width:33px;height:27px;background:#1db67a;border-radius:7px"><svg class="a" style="left:10px;top:7px" width="13" height="13" viewBox="0 0 13 13" fill="none" stroke="#dff" stroke-width="1.2"><path d="M12 1L1 5.5l4.5 2 2 4.5z"/><path d="M12 1L5.5 7.5"/></svg></div>
<svg class="a" style="left:535px;top:698px" width="19" height="17" viewBox="0 0 19 17"><path d="M9.5 0.5L0.5 8.5h2.5V16.5h5v-5h3v5h5V8.5h2.5z" fill="#363e54"/></svg>
<svg class="a" style="left:590px;top:698px" width="20" height="17" viewBox="0 0 20 17"><path d="M4 8.5C4 5.5 7 3.5 10.5 3.5S17 5.5 17.5 7.5L19 8v3.2l-1.6.5c-.5.9-1.2 1.7-2.1 2.2V16.5h-2.6v-2c-.7.2-1.4.2-2.2.2s-1.5 0-2.2-.2v2H5.7v-3.2C4.6 12.3 4 10.5 4 8.5z" fill="#363e54"/><path d="M4.2 8.2C2.8 8 2 7.2 2.3 6.2" fill="none" stroke="#363e54" stroke-width="1.2"/><ellipse cx="10.5" cy="2.2" rx="2.6" ry="1.8" fill="#363e54"/><path d="M8 3.6h5" stroke="#fff" stroke-width="0.7"/><circle cx="14.5" cy="7.8" r="0.8" fill="#fff"/></svg>
<svg class="a" style="left:647px;top:698px" width="18" height="17" viewBox="0 0 18 17"><path d="M9 1c4.7 0 8.5 2.9 8.5 6.5S13.7 14 9 14c-1 0-2-.1-2.9-.4L1.5 16l1.3-3.4C1.3 11.4.5 9.5.5 7.5.5 3.9 4.3 1 9 1z" fill="#363e54"/></svg>
<svg class="a" style="left:702px;top:697px" width="17" height="18" viewBox="0 0 17 18"><path d="M1.5 6.5L6 3l3 2.5L14 1.2" fill="none" stroke="#363e54" stroke-width="1.7"/><path d="M11 0.5h4.5V5z" fill="#363e54"/><rect x="0.5" y="9" width="16" height="8.5" rx="0.8" fill="#363e54"/><circle cx="8.5" cy="13.2" r="2.2" fill="#fff"/><rect x="2" y="11.2" width="1.6" height="1.4" fill="#fff"/><rect x="13.4" y="13.8" width="1.6" height="1.4" fill="#fff"/></svg>
<svg class="a" style="left:755.5px;top:698px" width="18" height="18" viewBox="0 0 18 18" fill="#363e54"><ellipse cx="12.5" cy="2.5" rx="5" ry="2.2"/><path d="M7.5 4.3c.3 1.2 2.4 2.2 5 2.2s4.7-1 5-2.2V6.3c-.3 1.2-2.4 2.2-5 2.2-1 0-2-.2-2.8-.4z"/><path d="M11 9.3c.5.1 1 .2 1.5.2 2.6 0 4.7-1 5-2.2v2c-.3 1.2-2.4 2.2-5 2.2l-.3 0z"/><ellipse cx="6.5" cy="8" rx="6" ry="2.4" stroke="#fff" stroke-width="0.8"/><path d="M.5 9.8c.3 1.3 2.8 2.4 6 2.4s5.7-1.1 6-2.4v2.1c-.3 1.3-2.8 2.4-6 2.4s-5.7-1.1-6-2.4z"/><path d="M.5 13c.3 1.3 2.8 2.4 6 2.4s5.7-1.1 6-2.4v2.1c-.3 1.3-2.8 2.4-6 2.4s-5.7-1.1-6-2.4z"/></svg>
</div>
<div class="a" style="left:1397px;top:369px;width:144px;height:106px;border-radius:10px;overflow:hidden;background:#0a1220"><svg class="a" style="left:0;top:0" width="144" height="106" viewBox="0 0 144 108" preserveAspectRatio="none"><defs><linearGradient id="sk0" x1="0" y1="0" x2="0" y2="1"><stop offset="0" stop-color="#e2e9ee"/><stop offset="0.25" stop-color="#dde6ec"/><stop offset="0.45" stop-color="#c4d5e2"/><stop offset="1" stop-color="#a9c4da"/></linearGradient><linearGradient id="dk0" x1="0" y1="0" x2="0" y2="1"><stop offset="0" stop-color="#0a1220" stop-opacity="0"/><stop offset="0.5" stop-color="#0a1220" stop-opacity="0.2"/><stop offset="0.8" stop-color="#070c16" stop-opacity="0.6"/><stop offset="1" stop-color="#05080f" stop-opacity="0.95"/></linearGradient></defs><rect width="144" height="108" fill="url(#sk0)"/><path d="M0 52 C15 50 25 48 40 50 C55 46 70 50 85 47 C100 45 120 48 144 47 V108 H0z" fill="#a6c2da"/><path d="M0 60 C20 56 35 60 50 57 C70 54 85 60 100 58 C120 55 130 60 144 58 V108 H0z" fill="#7eaad2"/><path d="M0 68 C18 64 34 68 52 65 C74 62 92 68 112 64 C126 62 136 64 144 63 V108 H0z" fill="#5892c6"/><path d="M0 76 C22 72 40 76 62 73 C84 70 104 74 124 71 C134 70 140 71 144 70 V108 H0z" fill="#3a76b0"/><path d="M0 85 C30 82 60 86 90 83 C110 81 130 83 144 82 V108 H0z" fill="#245a90"/><path d="M26 108 C28 86 42 74 58 72 L92 72 C110 74 124 90 128 108z" fill="#4a4a52"/><path d="M64 62 h20 v12 h-20z" fill="#a0745a"/><ellipse cx="74" cy="46" rx="17" ry="21" fill="#b98a6c"/><path d="M55 44 C52 24 62 15 76 15 C90 15 97 26 95 42 C92 33 86 28 74 28 C64 28 58 33 57 46z" fill="#3a2618"/><rect x="59" y="42" width="13" height="8" rx="3" fill="none" stroke="#222" stroke-width="1.8"/><rect x="75" y="42" width="13" height="8" rx="3" fill="none" stroke="#222" stroke-width="1.8"/><path d="M62 80 v26 M86 80 v22" stroke="#d8d8dc" stroke-width="1.5"/><rect x="0" y="62" width="144" height="46" fill="url(#dk0)"/></svg><div class="a" style="left:8px;top:79px;font-weight:bold;font-size:15.5px;line-height:18px;color:#fff;white-space:nowrap">Muhammad ...</div></div>
<div class="a" style="left:1397px;top:485px;width:144px;height:107px;border-radius:10px;overflow:hidden;background:#0a1220"><svg class="a" style="left:0;top:0" width="144" height="107" viewBox="0 0 144 108" preserveAspectRatio="none"><defs><linearGradient id="sk1" x1="0" y1="0" x2="0" y2="1"><stop offset="0" stop-color="#e2e9ee"/><stop offset="0.25" stop-color="#dde6ec"/><stop offset="0.45" stop-color="#c4d5e2"/><stop offset="1" stop-color="#a9c4da"/></linearGradient><linearGradient id="dk1" x1="0" y1="0" x2="0" y2="1"><stop offset="0" stop-color="#0a1220" stop-opacity="0"/><stop offset="0.5" stop-color="#0a1220" stop-opacity="0.2"/><stop offset="0.8" stop-color="#070c16" stop-opacity="0.6"/><stop offset="1" stop-color="#05080f" stop-opacity="0.95"/></linearGradient></defs><rect width="144" height="108" fill="url(#sk1)"/><path d="M0 52 C15 50 25 48 40 50 C55 46 70 50 85 47 C100 45 120 48 144 47 V108 H0z" fill="#a6c2da"/><path d="M0 60 C20 56 35 60 50 57 C70 54 85 60 100 58 C120 55 130 60 144 58 V108 H0z" fill="#7eaad2"/><path d="M0 68 C18 64 34 68 52 65 C74 62 92 68 112 64 C126 62 136 64 144 63 V108 H0z" fill="#5892c6"/><path d="M0 76 C22 72 40 76 62 73 C84 70 104 74 124 71 C134 70 140 71 144 70 V108 H0z" fill="#3a76b0"/><path d="M0 85 C30 82 60 86 90 83 C110 81 130 83 144 82 V108 H0z" fill="#245a90"/><ellipse cx="70" cy="86" rx="24" ry="26" fill="#9a6a4c"/><path d="M46 76 C46 58 58 50 72 50 C86 50 96 58 96 74 C90 66 82 62 70 62 C58 62 50 68 48 80z" fill="#2a1c14"/><path d="M44 78 a6 8 0 0 0 0 14z" fill="#333"/><path d="M50 108 C52 100 60 96 70 96 C82 96 90 100 92 108z" fill="#6a4a38"/><rect x="0" y="62" width="144" height="46" fill="url(#dk1)"/></svg><div class="a" style="left:8px;top:80px;font-weight:bold;font-size:15.5px;line-height:18px;color:#fff;white-space:nowrap">Muhammad ...</div></div>
<div class="a" style="left:1397px;top:601px;width:144px;height:108px;border-radius:10px;overflow:hidden;background:#0a1220"><svg class="a" style="left:0;top:0" width="144" height="108" viewBox="0 0 144 108" preserveAspectRatio="none"><defs><linearGradient id="sk2" x1="0" y1="0" x2="0" y2="1"><stop offset="0" stop-color="#e2e9ee"/><stop offset="0.25" stop-color="#dde6ec"/><stop offset="0.45" stop-color="#c4d5e2"/><stop offset="1" stop-color="#a9c4da"/></linearGradient><linearGradient id="dk2" x1="0" y1="0" x2="0" y2="1"><stop offset="0" stop-color="#0a1220" stop-opacity="0"/><stop offset="0.5" stop-color="#0a1220" stop-opacity="0.2"/><stop offset="0.8" stop-color="#070c16" stop-opacity="0.6"/><stop offset="1" stop-color="#05080f" stop-opacity="0.95"/></linearGradient></defs><rect width="144" height="108" fill="url(#sk2)"/><path d="M0 52 C15 50 25 48 40 50 C55 46 70 50 85 47 C100 45 120 48 144 47 V108 H0z" fill="#a6c2da"/><path d="M0 60 C20 56 35 60 50 57 C70 54 85 60 100 58 C120 55 130 60 144 58 V108 H0z" fill="#7eaad2"/><path d="M0 68 C18 64 34 68 52 65 C74 62 92 68 112 64 C126 62 136 64 144 63 V108 H0z" fill="#5892c6"/><path d="M0 76 C22 72 40 76 62 73 C84 70 104 74 124 71 C134 70 140 71 144 70 V108 H0z" fill="#3a76b0"/><path d="M0 85 C30 82 60 86 90 83 C110 81 130 83 144 82 V108 H0z" fill="#245a90"/><path d="M56 108 C58 90 64 80 74 78 L90 78 C104 80 116 92 122 108z" fill="#201a18"/><ellipse cx="88" cy="54" rx="17" ry="22" fill="#221a18"/><ellipse cx="90" cy="57" rx="12" ry="15" fill="#c9987c"/><rect x="80" y="50" width="9" height="6" rx="3" fill="none" stroke="#ddd" stroke-width="1"/><rect x="91" y="50" width="9" height="6" rx="3" fill="none" stroke="#ddd" stroke-width="1"/><path d="M85 64 h9" stroke="#c44a3a" stroke-width="2"/><circle cx="72" cy="62" r="4" fill="#d0804a"/><rect x="0" y="62" width="144" height="46" fill="url(#dk2)"/></svg><div class="a" style="left:8px;top:81px;font-weight:bold;font-size:15.5px;line-height:18px;color:#fff;white-space:nowrap">Nur Faidz Ha...</div></div>
<div class="a" style="left:1397px;top:717px;width:144px;height:108px;border-radius:10px;overflow:hidden;background:#0a1220"><svg class="a" style="left:0;top:0" width="144" height="108" viewBox="0 0 144 108" preserveAspectRatio="none"><defs><linearGradient id="sk3" x1="0" y1="0" x2="0" y2="1"><stop offset="0" stop-color="#e2e9ee"/><stop offset="0.25" stop-color="#dde6ec"/><stop offset="0.45" stop-color="#c4d5e2"/><stop offset="1" stop-color="#a9c4da"/></linearGradient><linearGradient id="dk3" x1="0" y1="0" x2="0" y2="1"><stop offset="0" stop-color="#0a1220" stop-opacity="0"/><stop offset="0.5" stop-color="#0a1220" stop-opacity="0.2"/><stop offset="0.8" stop-color="#070c16" stop-opacity="0.6"/><stop offset="1" stop-color="#05080f" stop-opacity="0.95"/></linearGradient></defs><rect width="144" height="108" fill="url(#sk3)"/><path d="M0 52 C15 50 25 48 40 50 C55 46 70 50 85 47 C100 45 120 48 144 47 V108 H0z" fill="#a6c2da"/><path d="M0 60 C20 56 35 60 50 57 C70 54 85 60 100 58 C120 55 130 60 144 58 V108 H0z" fill="#7eaad2"/><path d="M0 68 C18 64 34 68 52 65 C74 62 92 68 112 64 C126 62 136 64 144 63 V108 H0z" fill="#5892c6"/><path d="M0 76 C22 72 40 76 62 73 C84 70 104 74 124 71 C134 70 140 71 144 70 V108 H0z" fill="#3a76b0"/><path d="M0 85 C30 82 60 86 90 83 C110 81 130 83 144 82 V108 H0z" fill="#245a90"/><path d="M40 108 C44 98 60 94 86 94 C108 94 118 100 122 108z" fill="#1e1a1c"/><ellipse cx="88" cy="78" rx="17" ry="22" fill="#b08870"/><path d="M68 70 C68 54 78 48 88 48 C100 48 108 56 108 70 C104 62 96 58 88 58 C80 58 72 62 70 72z" fill="#1e1614"/><rect x="65" y="68" width="7" height="16" rx="3" fill="#bbb"/><rect x="104" y="68" width="7" height="16" rx="3" fill="#bbb"/><rect x="0" y="62" width="144" height="46" fill="url(#dk3)"/></svg><div class="a" style="left:8px;top:81px;font-weight:bold;font-size:15.5px;line-height:18px;color:#fff;white-space:nowrap">Abdu Muhai...</div></div>
<div class="a" style="left:1400px;top:474.5px;width:138px;height:2.5px;border-radius:2px;background:#3ed048"></div>
<div class="a" style="left:1577px;top:379px;font-size:15px;line-height:18px;color:#ececf0">Chat</div>
<div class="a" style="left:1562px;top:363px;width:204px;height:800px;overflow:hidden">
<div class="a" style="left:15px;top:64px;width:32px;height:32px;border-radius:8px;background:#e8802a;color:#fff;font-size:16px;line-height:32px;text-align:center">SB</div>
<div class="a" style="left:59px;top:62px;font-size:12.6px;line-height:16px;color:#c5c4cc;white-space:nowrap">Syahiratunadiah Hishammuddin</div>
<div class="a" style="left:59px;top:78px;font-size:12.6px;line-height:16px;color:#c5c4cc;white-space:nowrap">Innovation Associ...&nbsp;&nbsp;&nbsp;&nbsp;&middot; 20 mins</div>
<div class="a" style="left:59px;top:98px;width:41px;height:41.5px;border-radius:9px;background:#403f4b"></div>
<div class="a" style="left:70px;top:111px;font-size:12.75px;line-height:16px;color:#ececf0;white-space:nowrap">yes</div>
<div class="a" style="left:15px;top:146px;width:32px;height:32px;border-radius:8px;background:#2a86c8;color:#fff;font-size:16px;line-height:32px;text-align:center">N</div>
<div class="a" style="left:59px;top:144px;font-size:12.6px;line-height:16px;color:#c5c4cc;white-space:nowrap">Nate JomHack</div>
<div class="a" style="left:59px;top:160px;font-size:12.6px;line-height:16px;color:#c5c4cc;white-space:nowrap">JomHack, JomHack&nbsp;&nbsp;&middot; 15 mins</div>
<div class="a" style="left:59px;top:180px;width:200px;height:57.5px;border-radius:9px;background:#403f4b"></div>
<div class="a" style="left:70px;top:194px;font-size:12.75px;line-height:16px;color:#ececf0;white-space:nowrap">2minutes to go for<br>presentation</div>
<div class="a" style="left:15px;top:244px;width:32px;height:32px;border-radius:8px;overflow:hidden;background:linear-gradient(90deg,#6a6a6a 0%,#9a9a9a 20%,#7a7a7a 35%,#8a8a8a 60%,#5a5a5a 100%)"><div class="a" style="left:7px;top:8px;width:21px;height:14px;border-radius:10px 10px 4px 4px;background:#1e1e1e"></div><div class="a" style="left:9px;top:13px;width:16px;height:17px;border-radius:7px 7px 8px 8px;background:#b4b4b4"></div><div class="a" style="left:12px;top:23px;width:9px;height:3px;border-radius:2px;background:#eee"></div><div class="a" style="left:3px;top:27px;width:28px;height:8px;border-radius:8px 8px 0 0;background:#2a2a2a"></div></div>
<div class="a" style="left:59px;top:242px;font-size:12.6px;line-height:16px;color:#c5c4cc;white-space:nowrap">Johan Nasir Mentor</div>
<div class="a" style="left:59px;top:258px;font-size:12.6px;line-height:16px;color:#c5c4cc;white-space:nowrap">Council Member, ...&nbsp;&nbsp;&nbsp;&nbsp;&middot; 14 mins</div>
<div class="a" style="left:59px;top:278px;width:200px;height:185.5px;border-radius:9px;background:#403f4b"></div>
<div class="a" style="left:70px;top:291px;font-size:12.75px;line-height:16px;color:#ececf0;white-space:nowrap">Why is it do you think the<br>financial management and<br>advisory not integrated?<br>Are the spending habits<br>captured via the Chatbot?<br>Did you use any 3rd party<br>solutions or fully coded by<br>you or is this a mock up?<br>How will the app address<br>debt management?</div>
<div class="a" style="left:15px;top:470px;width:32px;height:32px;border-radius:8px;background:#e8802a;color:#fff;font-size:16px;line-height:32px;text-align:center">SB</div>
<div class="a" style="left:59px;top:468px;font-size:12.6px;line-height:16px;color:#c5c4cc;white-space:nowrap">Syahiratunadiah Hishammuddin</div>
<div class="a" style="left:59px;top:484px;font-size:12.6px;line-height:16px;color:#c5c4cc;white-space:nowrap">Innovation Associ...&nbsp;&nbsp;&nbsp;&nbsp;&middot; 10 mins</div>
<div class="a" style="left:59px;top:504px;width:95px;height:42px;border-radius:9px;background:#403f4b"></div>
<div class="a" style="left:70px;top:517px;font-size:12.75px;line-height:16px;color:#ececf0;white-space:nowrap">thanks team!</div>
</div>
<div class="a" style="left:1577px;top:1186px;width:189px;height:64px;overflow:hidden"><div class="a" style="left:0;top:0;width:230px;height:64px;border-radius:10px;border:1.5px solid #5d5c68"></div></div>
<svg class="a" style="left:1590px;top:1208px" width="20" height="20" viewBox="0 0 20 20"><circle cx="10" cy="10" r="9.5" fill="#c9c8d0"/><circle cx="6.8" cy="7.5" r="1.6" fill="#2e2d38"/><circle cx="13.2" cy="7.5" r="1.6" fill="#2e2d38"/><path d="M4.5 10.5h11a5.5 5.5 0 0 1-11 0z" fill="#2e2d38"/></svg>
<div class="a" style="left:1622px;top:1202px;font-size:12.75px;line-height:16px;color:#7d7c86;white-space:nowrap">What would you like to<br>share?</div>
<svg class="a" style="left:95px;top:1218px" width="20" height="20" viewBox="0 0 20 20" fill="none" stroke="#5f5e69" stroke-width="1.6"><rect x="1" y="1" width="7" height="7" rx="2"/><rect x="12" y="1" width="7" height="7" rx="2"/><rect x="1" y="12" width="7" height="7" rx="2"/><rect x="12" y="12" width="7" height="7" rx="2"/></svg>
<div class="a" style="left:131px;top:1210px;width:36px;height:36px;border-radius:9px;background:#43424e"></div>
<svg class="a" style="left:140px;top:1218px" width="19" height="20" viewBox="0 0 19 20" fill="#2ac8da"><rect x="0" y="0" width="9" height="20" rx="2"/><rect x="11" y="0" width="8" height="9" rx="2"/><rect x="11" y="11" width="8" height="9" rx="2"/></svg>
<svg class="a" style="left:183px;top:1218px" width="20" height="20" viewBox="0 0 20 20" fill="none" stroke="#f2f2f4" stroke-width="1.6"><rect x="0.8" y="0.8" width="18.4" height="18.4" rx="1"/><circle cx="10" cy="7.5" r="2.2"/><path d="M4.5 19c0-3.2 2.4-5.5 5.5-5.5s5.5 2.3 5.5 5.5"/></svg>
<div class="a" style="left:713px;top:1210px;width:36px;height:36px;border-radius:10px;background:#24232c"></div>
<div class="a" style="left:765px;top:1210px;width:36px;height:36px;border-radius:10px;background:#24232c"></div>
<div class="a" style="left:817px;top:1210px;width:36px;height:36px;border-radius:10px;background:#2b2a34"></div>
<svg class="a" style="left:721px;top:1220px" width="21" height="17" viewBox="0 0 21 17" fill="none" stroke="#f2f2f4" stroke-width="1.6"><rect x="0.8" y="0.8" width="13.5" height="15.4" rx="3.5"/><path d="M14.3 6.5l5.5-3.5v11l-5.5-3.5"/></svg>
<svg class="a" style="left:776px;top:1217px" width="15" height="23" viewBox="0 0 15 23" fill="none" stroke="#f2f2f4" stroke-width="1.6"><rect x="4" y="0.8" width="7" height="13" rx="3.5"/><path d="M1 10a6.5 6.5 0 0 0 13 0M7.5 16.5v5.5"/></svg>
<svg class="a" style="left:825px;top:1220px" width="20" height="17" viewBox="0 0 20 17" fill="none" stroke="#8a8993" stroke-width="1.5"><rect x="0.8" y="0.8" width="18.4" height="15.4" rx="1.5"/><path d="M10 13V4.5M6.5 8L10 4.5 13.5 8"/></svg>
<div class="a" style="left:866px;top:1210px;width:1px;height:35px;background:#4a4955"></div>
<svg class="a" style="left:890px;top:1220px" width="17" height="16" viewBox="0 0 17 16" fill="none" stroke="#f2f2f4" stroke-width="1.5"><path d="M0.5 4h16M0.5 11.5h16"/><circle cx="10.5" cy="4" r="2.3" fill="#2e2d38"/><circle cx="5.5" cy="11.5" r="2.3" fill="#2e2d38"/></svg>
<svg class="a" style="left:1417px;top:1218px" width="20" height="20" viewBox="0 0 20 20" fill="none" stroke="#f2f2f4" stroke-width="1.6"><circle cx="7" cy="5" r="4"/><path d="M1 14.5a3 3 0 0 1 3-3h6a3 3 0 0 1 3 3v0a5 5 0 0 1-5 5H6a5 5 0 0 1-5-5z"/><path d="M16 1v6M13 4h6"/></svg>
<div class="a" style="left:1453px;top:1210px;width:36px;height:36px;border-radius:9px;background:#43424e"></div>
<svg class="a" style="left:1461px;top:1218px" width="20" height="20" viewBox="0 0 20 20"><path d="M10 1a9 9 0 1 1-4.2 17L1 19.5l1.8-4.3A9 9 0 0 1 10 1z" fill="#2ac8da"/><path d="M6.5 8.5h7M6.5 11.5h5" stroke="#43424e" stroke-width="1.5" stroke-linecap="round"/></svg>
<svg class="a" style="left:1509px;top:1218px" width="21" height="20" viewBox="0 0 21 20" fill="none" stroke="#f2f2f4" stroke-width="1.6"><circle cx="6.5" cy="5" r="4"/><circle cx="15.5" cy="6" r="3"/><path d="M1 14.5a3 3 0 0 1 3-3h5a3 3 0 0 1 3 3a5 5 0 0 1-5 5H6a5 5 0 0 1-5-5z"/><path d="M14 11.5h3.5a3 3 0 0 1 3 3a4 4 0 0 1-4 4h-2"/></svg>
<div class="a" style="left:1525px;top:1205px;width:20px;height:20px;border-radius:10px;background:#6c6b75;color:#fff;font-size:11px;line-height:20px;text-align:center">4</div>

</body></html>
